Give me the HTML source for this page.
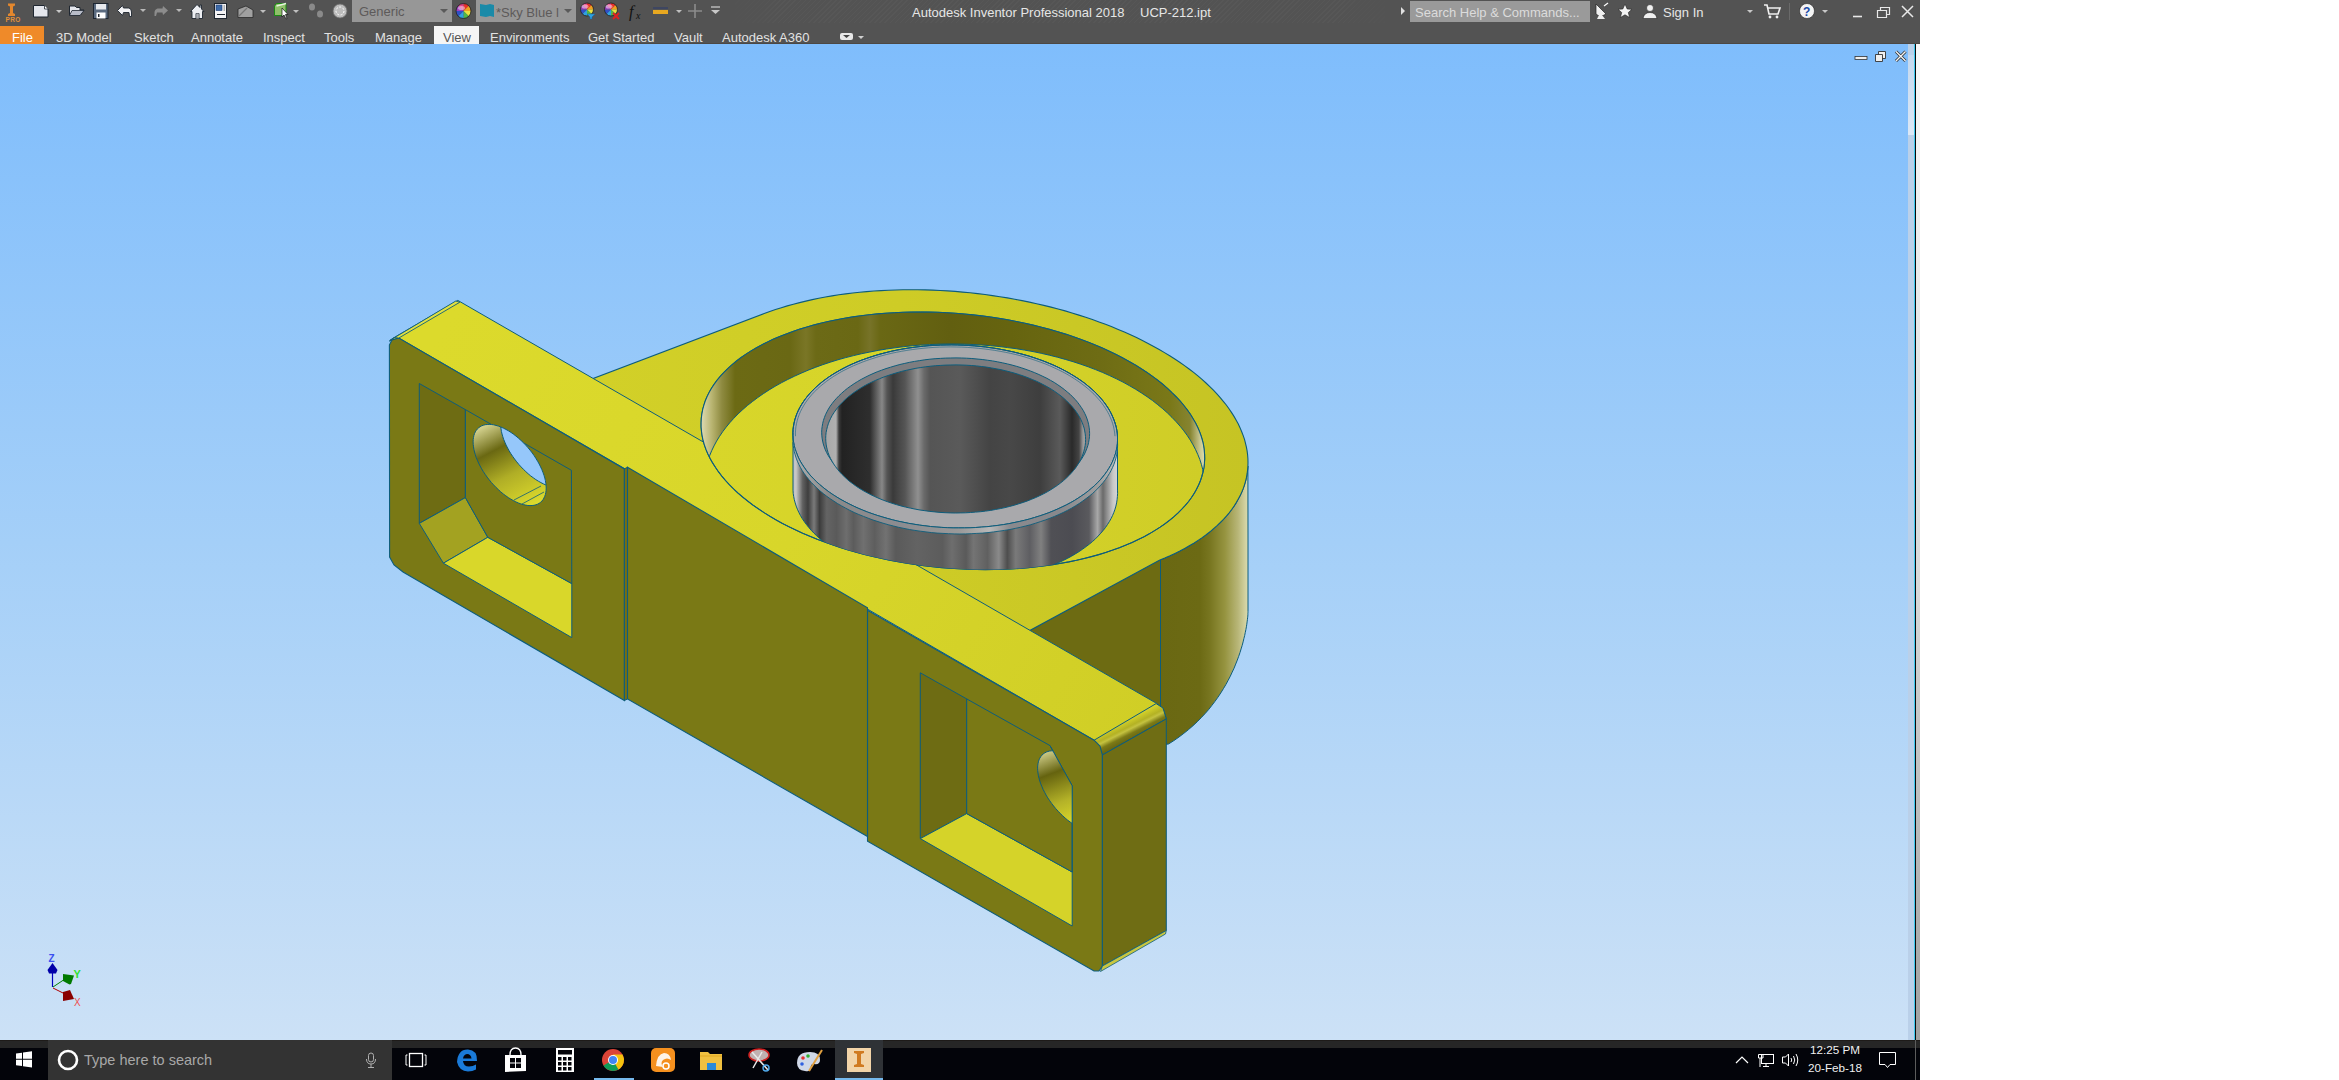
<!DOCTYPE html>
<html><head><meta charset="utf-8"><title>Autodesk Inventor Professional 2018</title>
<style>
html,body{margin:0;padding:0;}
body{width:2339px;height:1080px;position:relative;overflow:hidden;background:#ffffff;font-family:"Liberation Sans", sans-serif;}
.abs{position:absolute;}
#titlebar{left:0;top:0;width:1920px;height:44px;background:#535353;}
#viewport{left:0;top:44px;width:1908px;height:996px;background:linear-gradient(to bottom,#7fbdfc 0%,#a4cff8 50%,#cce1f6 100%);}
#vscroll{left:1908px;top:44px;width:6px;height:996px;background:#bad0e9;}
#vcyan{left:1914px;top:44px;width:1px;height:996px;background:#3cc8ee;}
#vline{left:1915px;top:44px;width:1px;height:996px;background:#0a0a0a;}
#vgap{left:1916px;top:44px;width:4px;height:996px;background:linear-gradient(to bottom,#f8f8f8 0%,#d8d8d8 55%,#a0a0a0 100%);}
#taskbar{left:0;top:1040px;width:1920px;height:40px;background:#03040a;}
.tab{position:absolute;top:29px;height:18px;font-size:13px;color:#e2e2e2;line-height:18px;white-space:nowrap;}
.ttl{position:absolute;top:5px;font-size:13px;color:#e6e6e6;line-height:16px;white-space:nowrap;}
</style></head>
<body>
<div id="titlebar" class="abs"></div>
<div class="abs" style="left:720px;top:0;width:680px;height:23px;background:repeating-linear-gradient(135deg,rgba(255,255,255,0) 0px,rgba(255,255,255,0) 2.6px,rgba(255,255,255,0.025) 2.6px,rgba(255,255,255,0.025) 3.6px);-webkit-mask-image:linear-gradient(to right,transparent 0,black 60px,black 620px,transparent 680px);"></div>
<div class="abs" style="left:0;top:43px;width:1920px;height:1px;background:#4c4844;"></div>
<div id="viewport" class="abs"></div>
<div id="vscroll" class="abs"></div>
<div id="vcyan" class="abs"></div>
<div id="vline" class="abs"></div>
<div class="abs" style="left:1908px;top:55px;width:6px;height:80px;background:linear-gradient(to bottom,#c4d8ee,#dce8f6);"></div>
<div id="vgap" class="abs"></div>
<div id="taskbar" class="abs"></div>
<div class="abs" style="left:0;top:1040px;width:1920px;height:8px;background:#262626;"></div><div class="abs" style="left:0;top:1040px;width:1920px;height:1px;background:#1e1b19;"></div><div class="abs" style="left:48px;top:1040px;width:344px;height:40px;background:#333333;"></div><div class="abs" style="left:835px;top:1040px;width:48px;height:40px;background:#2f3236;"></div><div class="abs" style="left:1915px;top:1040px;width:1px;height:40px;background:#5c5c5c;"></div><div class="abs" style="left:594px;top:1078px;width:40px;height:2px;background:#76b9ed;"></div><div class="abs" style="left:835px;top:1078px;width:48px;height:2px;background:#76b9ed;"></div><div class="abs" style="left:84px;top:1051px;font-size:14.5px;line-height:18px;color:#a8a8a8;font-family:"Liberation Sans", sans-serif;white-space:nowrap;">Type here to search</div><div class="abs" style="left:1810px;top:1043px;font-size:11.7px;line-height:14px;color:#f0f0f0;font-family:"Liberation Sans", sans-serif;white-space:nowrap;">12:25 PM</div><div class="abs" style="left:1808px;top:1061px;font-size:11.7px;line-height:14px;color:#f0f0f0;font-family:"Liberation Sans", sans-serif;white-space:nowrap;">20-Feb-18</div>

<div class="abs" style="left:0;top:26px;width:44px;height:18px;background:#ef8a29;"></div>
<div class="tab" style="left:12px;color:#ffffff;">File</div>
<div class="tab" style="left:56px;">3D Model</div>
<div class="tab" style="left:134px;">Sketch</div>
<div class="tab" style="left:191px;">Annotate</div>
<div class="tab" style="left:263px;">Inspect</div>
<div class="tab" style="left:324px;">Tools</div>
<div class="tab" style="left:375px;">Manage</div>
<div class="abs" style="left:434px;top:26px;width:45px;height:18px;background:#f5f5f5;"></div>
<div class="tab" style="left:443px;color:#555;">View</div>
<div class="tab" style="left:490px;">Environments</div>
<div class="tab" style="left:588px;">Get Started</div>
<div class="tab" style="left:674px;">Vault</div>
<div class="tab" style="left:722px;">Autodesk A360</div>

<div class="ttl" style="left:912px;">Autodesk Inventor Professional 2018</div>
<div class="ttl" style="left:1140px;">UCP-212.ipt</div>

<svg class="abs" style="left:0;top:0" width="2339" height="1080" viewBox="0 0 2339 1080">
<defs>
<linearGradient id="gCyl" x1="1160" y1="0" x2="1248" y2="0" gradientUnits="userSpaceOnUse"><stop offset="0.0000" stop-color="#6a6812"/><stop offset="0.4545" stop-color="#6c6a14"/><stop offset="0.5682" stop-color="#787620"/><stop offset="0.7386" stop-color="#969440"/><stop offset="0.8864" stop-color="#b8b678"/><stop offset="1.0000" stop-color="#dcdcb0"/></linearGradient>
<linearGradient id="gWall" x1="703" y1="0" x2="1205" y2="0" gradientUnits="userSpaceOnUse"><stop offset="0.0000" stop-color="#d8d4a8"/><stop offset="0.0179" stop-color="#b8b470"/><stop offset="0.0378" stop-color="#8e8a40"/><stop offset="0.0637" stop-color="#6c6a14"/><stop offset="0.1733" stop-color="#6a6814"/><stop offset="0.2052" stop-color="#7a7626"/><stop offset="0.2251" stop-color="#6c6a16"/><stop offset="0.3088" stop-color="#6a6814"/><stop offset="0.3327" stop-color="#777328"/><stop offset="0.3526" stop-color="#6a6814"/><stop offset="0.4920" stop-color="#625f10"/><stop offset="0.6116" stop-color="#66640f"/><stop offset="0.7908" stop-color="#6e6c14"/><stop offset="0.9303" stop-color="#7a7818"/><stop offset="0.9701" stop-color="#868430"/><stop offset="0.9900" stop-color="#c8c690"/><stop offset="1.0000" stop-color="#e0e0b0"/></linearGradient>
<linearGradient id="gBearSide" x1="793" y1="0" x2="1118" y2="0" gradientUnits="userSpaceOnUse"><stop offset="0.0000" stop-color="#c0c0c0"/><stop offset="0.0092" stop-color="#c8c8c8"/><stop offset="0.0298" stop-color="#606060"/><stop offset="0.0462" stop-color="#3e3e3e"/><stop offset="0.0646" stop-color="#7a7a7a"/><stop offset="0.0818" stop-color="#3c3c3c"/><stop offset="0.1037" stop-color="#646464"/><stop offset="0.1342" stop-color="#5a5a5a"/><stop offset="0.1643" stop-color="#6e6e6e"/><stop offset="0.1862" stop-color="#5c5c5c"/><stop offset="0.2166" stop-color="#707070"/><stop offset="0.2511" stop-color="#5e5e5e"/><stop offset="0.2862" stop-color="#727272"/><stop offset="0.3163" stop-color="#5a5a5a"/><stop offset="0.3815" stop-color="#636363"/><stop offset="0.4597" stop-color="#5c5c5c"/><stop offset="0.4892" stop-color="#6e6e6e"/><stop offset="0.5323" stop-color="#5a5a5a"/><stop offset="0.5551" stop-color="#747474"/><stop offset="0.5985" stop-color="#606060"/><stop offset="0.6332" stop-color="#8a8a8a"/><stop offset="0.6594" stop-color="#4e4e4e"/><stop offset="0.6852" stop-color="#7a7a7a"/><stop offset="0.7286" stop-color="#5e5e62"/><stop offset="0.7631" stop-color="#808080"/><stop offset="0.7938" stop-color="#505055"/><stop offset="0.8585" stop-color="#4c4c52"/><stop offset="0.9108" stop-color="#5a5a5e"/><stop offset="0.9372" stop-color="#a8a8a8"/><stop offset="0.9538" stop-color="#6a6a6a"/><stop offset="0.9846" stop-color="#c8c8c8"/><stop offset="1.0000" stop-color="#d8d8d8"/></linearGradient>
<linearGradient id="gBore" x1="826" y1="0" x2="1088" y2="0" gradientUnits="userSpaceOnUse"><stop offset="0.0000" stop-color="#a8a8a8"/><stop offset="0.0382" stop-color="#b0b0b0"/><stop offset="0.0496" stop-color="#3a3a3a"/><stop offset="0.0611" stop-color="#222222"/><stop offset="0.1679" stop-color="#2e2e2e"/><stop offset="0.1985" stop-color="#6a6a6a"/><stop offset="0.2137" stop-color="#888888"/><stop offset="0.2328" stop-color="#555555"/><stop offset="0.2557" stop-color="#3a3a3a"/><stop offset="0.3015" stop-color="#555555"/><stop offset="0.3511" stop-color="#909090"/><stop offset="0.3740" stop-color="#6a6a6a"/><stop offset="0.3969" stop-color="#555555"/><stop offset="0.5115" stop-color="#5a5a5a"/><stop offset="0.6260" stop-color="#444444"/><stop offset="0.7023" stop-color="#484848"/><stop offset="0.8168" stop-color="#3e3e3e"/><stop offset="0.8931" stop-color="#5a5a5a"/><stop offset="0.9389" stop-color="#2a2a2a"/><stop offset="0.9656" stop-color="#444444"/><stop offset="0.9809" stop-color="#9a9a9a"/><stop offset="1.0000" stop-color="#a8a8a8"/></linearGradient>
<linearGradient id="gTop" x1="593" y1="0" x2="1248" y2="0" gradientUnits="userSpaceOnUse"><stop offset="0.0000" stop-color="#d2d028"/><stop offset="0.4687" stop-color="#cecc26"/><stop offset="1.0000" stop-color="#c6c424"/></linearGradient>
<linearGradient id="gFloor" x1="703" y1="0" x2="1205" y2="0" gradientUnits="userSpaceOnUse"><stop offset="0.0000" stop-color="#d8d62a"/><stop offset="0.5120" stop-color="#d5d329"/><stop offset="1.0000" stop-color="#cfcd27"/></linearGradient>
<linearGradient id="gCham" x1="793" y1="0" x2="1118" y2="0" gradientUnits="userSpaceOnUse"><stop offset="0.0000" stop-color="#b0b0b0"/><stop offset="0.1138" stop-color="#8a8a8a"/><stop offset="0.3292" stop-color="#8c8c90"/><stop offset="0.5138" stop-color="#9a9a9a"/><stop offset="0.6062" stop-color="#b8b8b8"/><stop offset="0.6677" stop-color="#8a8a8e"/><stop offset="0.8215" stop-color="#88888c"/><stop offset="0.9446" stop-color="#a0a0a0"/><stop offset="1.0000" stop-color="#c0c0c0"/></linearGradient>
<linearGradient id="gStrip" x1="458" y1="301" x2="1160" y2="710" gradientUnits="userSpaceOnUse"><stop offset="0" stop-color="#dcda2c"/><stop offset="0.5" stop-color="#d8d62a"/><stop offset="1" stop-color="#d0ce26"/></linearGradient>
<linearGradient id="gFilR" x1="1126" y1="721" x2="1134" y2="737" gradientUnits="userSpaceOnUse"><stop offset="0" stop-color="#d2d02a"/><stop offset="0.35" stop-color="#b4b224"/><stop offset="0.5" stop-color="#c4c240"/><stop offset="0.75" stop-color="#7c7a16"/><stop offset="1" stop-color="#6a6812"/></linearGradient>
<clipPath id="cRim"><path d="M701.3,418.2 L701.9,413.8 L702.7,409.4 L703.9,405.1 L705.3,400.8 L707.1,396.5 L709.2,392.3 L711.5,388.2 L714.2,384.1 L717.1,380.1 L720.4,376.2 L723.9,372.3 L727.7,368.6 L731.8,364.9 L736.1,361.3 L740.7,357.8 L745.6,354.4 L750.7,351.1 L756.0,348.0 L761.6,344.9 L767.5,342.0 L773.5,339.1 L779.8,336.4 L786.3,333.9 L793.0,331.4 L799.9,329.1 L807.0,327.0 L814.2,324.9 L821.6,323.0 L829.2,321.3 L836.9,319.7 L844.8,318.2 L852.8,316.9 L860.9,315.8 L869.2,314.8 L877.5,313.9 L886.0,313.2 L894.5,312.7 L903.1,312.3 L911.7,312.1 L920.4,312.0 L929.1,312.1 L937.9,312.3 L946.7,312.7 L955.5,313.3 L964.2,314.0 L973.0,314.9 L981.8,315.9 L990.5,317.0 L999.1,318.4 L1007.8,319.8 L1016.3,321.5 L1024.8,323.2 L1033.1,325.1 L1041.4,327.2 L1049.6,329.4 L1057.7,331.7 L1065.6,334.1 L1073.4,336.7 L1081.0,339.4 L1088.5,342.3 L1095.8,345.2 L1103.0,348.3 L1109.9,351.5 L1116.7,354.8 L1123.3,358.2 L1129.6,361.7 L1135.8,365.3 L1141.7,369.0 L1147.4,372.7 L1152.9,376.6 L1158.1,380.5 L1163.1,384.5 L1167.8,388.6 L1172.2,392.8 L1176.4,397.0 L1180.3,401.2 L1183.9,405.5 L1187.3,409.9 L1190.4,414.2 L1193.1,418.7 L1195.6,423.1 L1197.8,427.6 L1199.7,432.0 L1201.3,436.5 L1202.6,441.0 L1203.6,445.5 L1204.2,450.0 L1204.6,454.5 L1204.7,458.9 L1204.4,463.4 L1203.9,467.8 L1203.0,472.2 L1201.8,476.5 L1200.4,480.8 L1198.6,485.1 L1196.5,489.3 L1194.2,493.4 L1191.5,497.5 L1188.6,501.5 L1185.3,505.4 L1181.8,509.2 L1178.0,513.0 L1174.0,516.7 L1169.6,520.3 L1165.0,523.8 L1160.2,527.1 L1155.0,530.4 L1149.7,533.6 L1144.1,536.7 L1138.2,539.6 L1132.2,542.4 L1125.9,545.1 L1119.4,547.7 L1112.7,550.1 L1105.8,552.4 L1098.8,554.6 L1091.5,556.6 L1084.1,558.5 L1076.5,560.3 L1068.8,561.9 L1060.9,563.3 L1052.9,564.7 L1044.8,565.8 L1036.5,566.8 L1028.2,567.7 L1019.8,568.4 L1011.2,568.9 L1002.7,569.3 L994.0,569.5 L985.3,569.6 L976.6,569.5 L967.8,569.2 L959.0,568.8 L950.3,568.3 L941.5,567.6 L932.7,566.7 L923.9,565.7 L915.2,564.5 L906.6,563.2 L898.0,561.7 L889.4,560.1 L880.9,558.3 L872.6,556.4 L864.3,554.4 L856.1,552.2 L848.1,549.9 L840.1,547.4 L832.3,544.8 L824.7,542.1 L817.2,539.3 L809.9,536.3 L802.7,533.3 L795.8,530.1 L789.0,526.8 L782.4,523.4 L776.1,519.9 L769.9,516.3 L764.0,512.6 L758.3,508.8 L752.8,505.0 L747.6,501.0 L742.6,497.0 L737.9,493.0 L733.5,488.8 L729.3,484.6 L725.4,480.4 L721.8,476.1 L718.4,471.7 L715.4,467.3 L712.6,462.9 L710.1,458.5 L707.9,454.0 L706.0,449.5 L704.4,445.0 L703.1,440.5 L702.2,436.1 L701.5,431.6 L701.1,427.1 L701.1,422.6 Z"/></clipPath>
<clipPath id="cRimAbove"><path d="M701.3,418.2 L701.9,413.8 L702.7,409.4 L703.9,405.1 L705.3,400.8 L707.1,396.5 L709.2,392.3 L711.5,388.2 L714.2,384.1 L717.1,380.1 L720.4,376.2 L723.9,372.3 L727.7,368.6 L731.8,364.9 L736.1,361.3 L740.7,357.8 L745.6,354.4 L750.7,351.1 L756.0,348.0 L761.6,344.9 L767.5,342.0 L773.5,339.1 L779.8,336.4 L786.3,333.9 L793.0,331.4 L799.9,329.1 L807.0,327.0 L814.2,324.9 L821.6,323.0 L829.2,321.3 L836.9,319.7 L844.8,318.2 L852.8,316.9 L860.9,315.8 L869.2,314.8 L877.5,313.9 L886.0,313.2 L894.5,312.7 L903.1,312.3 L911.7,312.1 L920.4,312.0 L929.1,312.1 L937.9,312.3 L946.7,312.7 L955.5,313.3 L964.2,314.0 L973.0,314.9 L981.8,315.9 L990.5,317.0 L999.1,318.4 L1007.8,319.8 L1016.3,321.5 L1024.8,323.2 L1033.1,325.1 L1041.4,327.2 L1049.6,329.4 L1057.7,331.7 L1065.6,334.1 L1073.4,336.7 L1081.0,339.4 L1088.5,342.3 L1095.8,345.2 L1103.0,348.3 L1109.9,351.5 L1116.7,354.8 L1123.3,358.2 L1129.6,361.7 L1135.8,365.3 L1141.7,369.0 L1147.4,372.7 L1152.9,376.6 L1158.1,380.5 L1163.1,384.5 L1167.8,388.6 L1172.2,392.8 L1176.4,397.0 L1180.3,401.2 L1183.9,405.5 L1187.3,409.9 L1190.4,414.2 L1193.1,418.7 L1195.6,423.1 L1197.8,427.6 L1199.7,432.0 L1201.3,436.5 L1202.6,441.0 L1203.6,445.5 L1204.2,450.0 L1204.6,454.5 L1204.7,458.9 L1204.4,463.4 L1203.9,467.8 L1203.0,472.2 L1201.8,476.5 L1200.4,480.8 L1198.6,485.1 L1196.5,489.3 L1194.2,493.4 L1191.5,497.5 L1188.6,501.5 L1185.3,505.4 L1181.8,509.2 L1178.0,513.0 L1174.0,516.7 L1169.6,520.3 L1165.0,523.8 L1160.2,527.1 L1155.0,530.4 L1149.7,533.6 L1144.1,536.7 L1138.2,539.6 L1132.2,542.4 L1125.9,545.1 L1119.4,547.7 L1112.7,550.1 L1105.8,552.4 L1098.8,554.6 L1091.5,556.6 L1084.1,558.5 L1076.5,560.3 L1068.8,561.9 L1060.9,563.3 L1052.9,564.7 L1044.8,565.8 L1036.5,566.8 L1028.2,567.7 L1019.8,568.4 L1011.2,568.9 L1002.7,569.3 L994.0,569.5 L985.3,569.6 L976.6,569.5 L967.8,569.2 L959.0,568.8 L950.3,568.3 L941.5,567.6 L932.7,566.7 L923.9,565.7 L915.2,564.5 L906.6,563.2 L898.0,561.7 L889.4,560.1 L880.9,558.3 L872.6,556.4 L864.3,554.4 L856.1,552.2 L848.1,549.9 L840.1,547.4 L832.3,544.8 L824.7,542.1 L817.2,539.3 L809.9,536.3 L802.7,533.3 L795.8,530.1 L789.0,526.8 L782.4,523.4 L776.1,519.9 L769.9,516.3 L764.0,512.6 L758.3,508.8 L752.8,505.0 L747.6,501.0 L742.6,497.0 L737.9,493.0 L733.5,488.8 L729.3,484.6 L725.4,480.4 L721.8,476.1 L718.4,471.7 L715.4,467.3 L712.6,462.9 L710.1,458.5 L707.9,454.0 L706.0,449.5 L704.4,445.0 L703.1,440.5 L702.2,436.1 L701.5,431.6 L701.1,427.1 L701.1,422.6 Z"/></clipPath>
<linearGradient id="gHoleL" x1="488" y1="425" x2="530" y2="506" gradientUnits="userSpaceOnUse"><stop offset="0" stop-color="#d0ce8a"/><stop offset="0.28" stop-color="#6a6812"/><stop offset="0.6" stop-color="#b0ae26"/><stop offset="1" stop-color="#dcda2c"/></linearGradient>
<clipPath id="cHoleL"><path d="M478.7,427.7 L480.1,426.7 L481.7,425.8 L483.4,425.2 L485.2,424.7 L487.2,424.5 L489.2,424.4 L491.4,424.5 L493.7,424.8 L496.0,425.4 L498.4,426.1 L500.8,427.0 L503.3,428.1 L505.9,429.4 L508.4,430.8 L511.0,432.4 L513.5,434.2 L516.0,436.1 L518.5,438.2 L521.0,440.4 L523.4,442.7 L525.7,445.1 L527.9,447.6 L530.1,450.2 L532.2,452.9 L534.1,455.6 L535.9,458.4 L537.6,461.2 L539.2,464.0 L540.6,466.9 L541.9,469.7 L543.0,472.5 L544.0,475.3 L544.8,478.0 L545.4,480.6 L545.8,483.2 L546.1,485.7 L546.2,488.1 L546.1,490.4 L545.8,492.5 L545.4,494.5 L544.7,496.4 L543.9,498.1 L543.0,499.7 L541.9,501.1 L540.6,502.3 L539.2,503.3 L537.6,504.2 L535.9,504.8 L534.0,505.3 L532.1,505.5 L530.0,505.6 L527.9,505.5 L525.6,505.1 L523.3,504.6 L520.9,503.9 L518.4,503.0 L515.9,501.9 L513.4,500.6 L510.9,499.2 L508.3,497.6 L505.8,495.8 L503.2,493.9 L500.7,491.8 L498.3,489.6 L495.9,487.3 L493.6,484.9 L491.3,482.4 L489.2,479.8 L487.1,477.1 L485.2,474.4 L483.3,471.6 L481.6,468.8 L480.1,466.0 L478.6,463.1 L477.4,460.3 L476.2,457.5 L475.3,454.7 L474.5,452.0 L473.9,449.4 L473.5,446.8 L473.2,444.3 L473.1,441.9 L473.2,439.6 L473.5,437.5 L473.9,435.5 L474.5,433.6 L475.3,431.9 L476.3,430.3 L477.4,428.9 Z"/></clipPath>
<linearGradient id="gHoleR" x1="1045" y1="752" x2="1072" y2="822" gradientUnits="userSpaceOnUse"><stop offset="0" stop-color="#d0ce8a"/><stop offset="0.3" stop-color="#65630f"/><stop offset="0.7" stop-color="#b4b228"/><stop offset="1" stop-color="#d8d62a"/></linearGradient>
<clipPath id="cPocketR"><path d="M966.7,698.9 L1050.0,745.6 L1072.2,785.8 L1072.2,872.0 L966.7,813.6 Z"/></clipPath>
</defs>
<path d="M8,3.5 L15,3.5 L15,5.5 L13,6.5 L13,13 L15,14 L15,16 L8,16 L8,14 L10,13 L10,6.5 L8,5.5 Z" fill="#e3872d"/><text x="5.5" y="22" font-family='"Liberation Sans", sans-serif' font-size="6.5" font-weight="bold" fill="#e0903a" letter-spacing="0.3">PRO</text><path d="M33.5,5.5 L44.5,5.5 L48,9 L48,17 L33.5,17 Z" fill="#e4e6ec" stroke="#1e2630" stroke-width="1"/><path d="M44.5,5.5 L44.5,9 L48,9" fill="#fff" stroke="#1e2630" stroke-width="0.8"/><path d="M56,10 L62,10 L59,13 Z" fill="#c8c8c8"/><path d="M69.5,6 L75,6 L76.5,7.5 L80,7.5 L80,10 L84,10 L80,15.5 L69.5,15.5 Z" fill="#e4e6ec" stroke="#1e2630" stroke-width="1"/><path d="M72,10.5 L84,10.5 L80,15.5 L69.5,15.5 Z" fill="#b8bcc8" stroke="#1e2630" stroke-width="0.8"/><rect x="93.5" y="3.5" width="14.5" height="15" fill="#5b6b80" stroke="#1e2630" stroke-width="1"/><rect x="96" y="4" width="10" height="5.5" fill="#e8eaee"/><rect x="96.5" y="12.5" width="9" height="6" fill="#ffffff"/><rect x="98" y="14" width="1.5" height="3" fill="#1e2630"/><path d="M117.5,10.5 L122.5,5.5 L123.5,8 L129,8 Q131.5,9 131.5,12 L131.5,16.5 L129.5,16.5 L129,12.5 L123.5,12.5 L122.5,15.5 Z" fill="#f2f2f4" stroke="#1e2630" stroke-width="0.9"/><path d="M140,9 L146,9 L143,12 Z" fill="#b8b8b8"/><path d="M168,10.5 L163,6 L162.5,8.5 L157.5,8.5 Q154.5,9.5 154.5,12.5 L154.5,16 L156,16 L157,12.5 L162.5,12.5 L163,15 Z" fill="#8c8c8c"/><path d="M176,9 L182,9 L179,12 Z" fill="#b8b8b8"/><path d="M190.5,11.5 L197,4.5 L200,7.5 L200,5 L201.5,5 L201.5,9 L204,11.5 L202.5,11.5 L202.5,18.5 L199,18.5 L199,13.5 L196,13.5 L196,18.5 L192,18.5 L192,11.5 Z" fill="#eceef2" stroke="#1e2630" stroke-width="0.9"/><rect x="196.2" y="13.5" width="2.6" height="5" fill="#a8acb4"/><rect x="214.5" y="3.5" width="12" height="15" fill="#f4f4f6" stroke="#1e2630" stroke-width="1"/><rect x="216" y="5" width="6" height="5.5" fill="#3d6aa8" stroke="#1a3a70" stroke-width="0.6"/><rect x="223.5" y="5" width="1.5" height="6" fill="#b0b0b0"/><path d="M217,14.5 L225,14.5" stroke="#1e2630" stroke-width="1"/><path d="M238,9 L246,6 L253,10 L253,17.5 L238,17.5 Z" fill="#a0a0a0" stroke="#2a2a2a" stroke-width="0.8"/><path d="M239,16 L247,8" stroke="#777" stroke-width="1.2"/><path d="M260,10 L266,10 L263,13 Z" fill="#c0c0c0"/><path d="M274.5,6 L276.5,3.5 L286,3.5 L286,14 L283.5,15.5 L274.5,15.5 Z" fill="#8fbf6a" stroke="#1c8a14" stroke-width="1"/><path d="M276.5,6 L286,3.5" stroke="#e8f4e0" stroke-width="1.5"/><path d="M282,8 L282,17 L284,15 L286,19 L287,18.5 L285.5,14.5 L288,14.5 Z" fill="#fff" stroke="#111" stroke-width="0.7"/><path d="M293,10 L299,10 L296,13 Z" fill="#c0c0c0"/><ellipse cx="312" cy="7" rx="3" ry="3.5" fill="#8a8a8a"/><ellipse cx="320" cy="14" rx="3" ry="3.5" fill="#8a8a8a"/><circle cx="340" cy="11" r="7" fill="#bcbcbc" stroke="#6a6a6a" stroke-width="0.8"/><circle cx="340" cy="11" r="4" fill="none" stroke="#ffffff" stroke-width="1" stroke-dasharray="2 1.5"/><rect x="352" y="0" width="100" height="22" fill="#979797"/><text x="359" y="16" font-family='"Liberation Sans", sans-serif' font-size="13" fill="#5d5a5a">Generic</text><path d="M440,9 L448,9 L444,13 Z" fill="#5a5a5a"/><path d="M463.5,11 L463.50,3.50 A7.5,7.5 0 0 1 468.80,5.70 Z" fill="#e8302a"/><path d="M463.5,11 L468.80,5.70 A7.5,7.5 0 0 1 471.00,11.00 Z" fill="#f0a020"/><path d="M463.5,11 L471.00,11.00 A7.5,7.5 0 0 1 468.80,16.30 Z" fill="#e8e040"/><path d="M463.5,11 L468.80,16.30 A7.5,7.5 0 0 1 463.50,18.50 Z" fill="#50b848"/><path d="M463.5,11 L463.50,18.50 A7.5,7.5 0 0 1 458.20,16.30 Z" fill="#30a0e0"/><path d="M463.5,11 L458.20,16.30 A7.5,7.5 0 0 1 456.00,11.00 Z" fill="#3050c8"/><path d="M463.5,11 L456.00,11.00 A7.5,7.5 0 0 1 458.20,5.70 Z" fill="#a040c0"/><path d="M463.5,11 L458.20,5.70 A7.5,7.5 0 0 1 463.50,3.50 Z" fill="#e04088"/><circle cx="463.5" cy="11" r="7.5" fill="none" stroke="#202020" stroke-width="0.8"/><ellipse cx="461.5" cy="8" rx="3.5" ry="2" fill="#fff" opacity="0.45"/><rect x="476" y="0" width="100" height="22" fill="#979797"/><path d="M480,4 L486,5 L490,4 L494,5 L494,17 L490,16 L486,17 L480,16 Z" fill="#1a8aa8"/><text x="496" y="17" font-family='"Liberation Sans", sans-serif' font-size="13" fill="#5d5a5a">*Sky Blue l</text><path d="M564,9 L572,9 L568,13 Z" fill="#5a5a5a"/><path d="M587,9.5 L587.00,3.00 A6.5,6.5 0 0 1 591.60,4.90 Z" fill="#e8302a"/><path d="M587,9.5 L591.60,4.90 A6.5,6.5 0 0 1 593.50,9.50 Z" fill="#f0a020"/><path d="M587,9.5 L593.50,9.50 A6.5,6.5 0 0 1 591.60,14.10 Z" fill="#e8e040"/><path d="M587,9.5 L591.60,14.10 A6.5,6.5 0 0 1 587.00,16.00 Z" fill="#50b848"/><path d="M587,9.5 L587.00,16.00 A6.5,6.5 0 0 1 582.40,14.10 Z" fill="#30a0e0"/><path d="M587,9.5 L582.40,14.10 A6.5,6.5 0 0 1 580.50,9.50 Z" fill="#3050c8"/><path d="M587,9.5 L580.50,9.50 A6.5,6.5 0 0 1 582.40,4.90 Z" fill="#a040c0"/><path d="M587,9.5 L582.40,4.90 A6.5,6.5 0 0 1 587.00,3.00 Z" fill="#e04088"/><circle cx="587" cy="9.5" r="6.5" fill="none" stroke="#202020" stroke-width="0.8"/><ellipse cx="585" cy="6.5" rx="3.5" ry="2" fill="#fff" opacity="0.45"/><path d="M587,14 L595,14 L592,17 L592,19 L590,19 L590,17 Z" fill="#30a0e0" stroke="#1060a0" stroke-width="0.5"/><path d="M611,9.5 L611.00,3.00 A6.5,6.5 0 0 1 615.60,4.90 Z" fill="#e8302a"/><path d="M611,9.5 L615.60,4.90 A6.5,6.5 0 0 1 617.50,9.50 Z" fill="#f0a020"/><path d="M611,9.5 L617.50,9.50 A6.5,6.5 0 0 1 615.60,14.10 Z" fill="#e8e040"/><path d="M611,9.5 L615.60,14.10 A6.5,6.5 0 0 1 611.00,16.00 Z" fill="#50b848"/><path d="M611,9.5 L611.00,16.00 A6.5,6.5 0 0 1 606.40,14.10 Z" fill="#30a0e0"/><path d="M611,9.5 L606.40,14.10 A6.5,6.5 0 0 1 604.50,9.50 Z" fill="#3050c8"/><path d="M611,9.5 L604.50,9.50 A6.5,6.5 0 0 1 606.40,4.90 Z" fill="#a040c0"/><path d="M611,9.5 L606.40,4.90 A6.5,6.5 0 0 1 611.00,3.00 Z" fill="#e04088"/><circle cx="611" cy="9.5" r="6.5" fill="none" stroke="#202020" stroke-width="0.8"/><ellipse cx="609" cy="6.5" rx="3.5" ry="2" fill="#fff" opacity="0.45"/><path d="M613,13 L619,19 M619,13 L613,19" stroke="#e02020" stroke-width="1.8"/><text x="629" y="17" font-family="Liberation Serif, serif" font-style="italic" font-size="16" fill="#111">f</text><text x="636" y="19" font-family="Liberation Serif, serif" font-style="italic" font-size="10" fill="#111">x</text><path d="M653,8 L668,8" stroke="#2a3a70" stroke-width="1"/><rect x="653" y="10" width="15" height="4" fill="#e8a820"/><path d="M676,10 L682,10 L679,13 Z" fill="#c0c0c0"/><path d="M695,4 L695,18 M688,11 L702,11" stroke="#8c8c8c" stroke-width="1.6"/><path d="M711,7 L720,7" stroke="#c8c8c8" stroke-width="1.3"/><path d="M711,10 L720,10 L715.5,14 Z" fill="#c8c8c8"/><rect x="840" y="33" width="13" height="7" rx="2" fill="#e8e8e8"/><path d="M843,35 L850,35 L846.5,38 Z" fill="#444"/><path d="M858,36 L864,36 L861,39 Z" fill="#d0d0d0"/>
<path d="M1401,7 L1405,11 L1401,15 Z" fill="#e0e0e0"/><rect x="1410" y="1" width="180" height="21" fill="#9a9a9a"/><text x="1415" y="17" font-family='"Liberation Sans", sans-serif' font-size="13" fill="#dcdcdc">Search Help &amp; Commands...</text><path d="M1596,4 L1606,14 Q1600,18 1596,14 Z" fill="#f0f0f0" stroke="#222" stroke-width="0.7"/><path d="M1599,15 L1597,19 L1605,19 L1602,15 Z" fill="#f0f0f0"/><path d="M1604,6 L1608,3" stroke="#fff" stroke-width="1.2"/><path d="M1625,4 L1627.2,9 L1632,9.3 L1628.3,12.5 L1629.6,17.5 L1625,14.8 L1620.4,17.5 L1621.7,12.5 L1618,9.3 L1622.8,9 Z" fill="#f4f4f4" stroke="#222" stroke-width="0.6"/><circle cx="1650" cy="8" r="3.5" fill="#f0f0f0" stroke="#222" stroke-width="0.6"/><path d="M1643,18.5 Q1644,12.5 1650,12.5 Q1656,12.5 1657,18.5 Z" fill="#f0f0f0" stroke="#222" stroke-width="0.6"/><text x="1663" y="17" font-family='"Liberation Sans", sans-serif' font-size="13" fill="#e6e6e6">Sign In</text><path d="M1747,10 L1753,10 L1750,13 Z" fill="#c8c8c8"/><path d="M1764,5 L1767,5 L1769,14 L1778,14 L1780,8 L1768,8" fill="none" stroke="#f0f0f0" stroke-width="1.6"/><circle cx="1770" cy="17" r="1.4" fill="#f0f0f0"/><circle cx="1777" cy="17" r="1.4" fill="#f0f0f0"/><path d="M1789.5,3 L1789.5,20" stroke="#6a6a6a" stroke-width="1"/><circle cx="1807" cy="11" r="7.5" fill="#f4f4f4" stroke="#222" stroke-width="0.6"/><text x="1803" y="16" font-family='"Liberation Sans", sans-serif' font-size="12" font-weight="bold" fill="#1a4aa8">?</text><path d="M1822,10 L1828,10 L1825,13 Z" fill="#c8c8c8"/><path d="M1853,16.5 L1862,16.5" stroke="#e8e8e8" stroke-width="1.6"/><path d="M1877.5,10.5 L1886.5,10.5 L1886.5,17.5 L1877.5,17.5 Z M1880.5,10.5 L1880.5,7.5 L1889.5,7.5 L1889.5,14.5 L1886.5,14.5" fill="none" stroke="#e8e8e8" stroke-width="1.2"/><path d="M1902,6 L1913,17 M1913,6 L1902,17" stroke="#e8e8e8" stroke-width="1.5"/><rect x="1855" y="56.5" width="12" height="3" fill="#f0f0f0" stroke="#333" stroke-width="0.8"/><path d="M1875.5,54.5 L1882.5,54.5 L1882.5,61.5 L1875.5,61.5 Z M1878.5,54.5 L1878.5,51.5 L1885.5,51.5 L1885.5,58.5 L1882.5,58.5" fill="#f0f0f0" stroke="#333" stroke-width="0.9"/><path d="M1896,51.5 L1905.5,61 M1905.5,51.5 L1896,61" stroke="#333" stroke-width="3"/><path d="M1896,51.5 L1905.5,61 M1905.5,51.5 L1896,61" stroke="#f4f4f4" stroke-width="1.4"/>
<path d="M1159.4,560.3 L1163.5,558.6 L1167.4,556.9 L1171.3,555.2 L1175.1,553.4 L1178.8,551.6 L1182.4,549.7 L1185.9,547.8 L1189.4,545.8 L1192.7,543.8 L1196.0,541.8 L1199.2,539.7 L1202.3,537.5 L1205.3,535.4 L1208.2,533.2 L1211.0,531.0 L1213.7,528.7 L1216.3,526.4 L1218.8,524.0 L1221.2,521.7 L1223.6,519.3 L1225.8,516.8 L1227.9,514.4 L1229.9,511.9 L1231.8,509.4 L1233.6,506.8 L1235.3,504.2 L1236.9,501.6 L1238.4,499.0 L1239.8,496.4 L1241.1,493.7 L1242.3,491.0 L1243.3,488.3 L1244.3,485.6 L1245.1,482.8 L1245.9,480.0 L1246.5,477.3 L1247.0,474.5 L1247.4,471.6 L1247.7,468.8 L1247.9,466.0 L1248.0,540.0 L1248.0,611.5 L1248.0,612.3 L1247.9,613.3 L1247.9,614.6 L1247.8,616.1 L1247.6,617.8 L1247.4,619.7 L1247.1,621.9 L1246.8,624.2 L1246.4,626.8 L1245.9,629.5 L1245.3,632.3 L1244.7,635.4 L1243.9,638.5 L1243.1,641.9 L1242.2,645.3 L1241.1,648.9 L1240.0,652.5 L1238.7,656.3 L1237.3,660.1 L1235.7,664.1 L1234.1,668.1 L1232.2,672.1 L1230.3,676.2 L1228.1,680.4 L1225.9,684.5 L1223.4,688.7 L1220.8,692.9 L1218.0,697.1 L1215.0,701.3 L1211.8,705.5 L1208.5,709.7 L1204.9,713.8 L1201.1,717.8 L1197.2,721.8 L1193.0,725.7 L1188.5,729.6 L1183.9,733.3 L1179.0,737.0 L1173.9,740.6 L1168.5,744.0 L1160.5,745.0 Z" fill="url(#gCyl)" stroke="#0d5d7c" stroke-width="1"/>
<path d="M1020.0,628.0 L1160.5,558.0 L1160.5,706.0 L1156.0,704.0 Z" fill="#6d6b12" stroke="#0d5d7c" stroke-width="1"/>
<path d="M590.0,385.0 L593.2,378.5 L764.2,313.6 L769.8,311.5 L775.5,309.6 L781.4,307.7 L787.3,305.9 L793.4,304.2 L799.6,302.6 L805.9,301.1 L812.3,299.6 L818.8,298.3 L825.4,297.0 L832.1,295.9 L838.9,294.8 L845.7,293.9 L852.7,293.0 L859.7,292.3 L866.7,291.6 L873.9,291.0 L881.1,290.6 L888.3,290.2 L895.6,290.0 L902.9,289.8 L910.3,289.7 L917.7,289.8 L925.2,289.9 L932.6,290.1 L940.1,290.5 L947.6,290.9 L955.1,291.4 L962.6,292.1 L970.1,292.8 L977.6,293.6 L985.0,294.5 L992.5,295.6 L999.9,296.7 L1007.4,297.9 L1014.7,299.2 L1022.1,300.6 L1029.4,302.1 L1036.6,303.7 L1043.8,305.4 L1051.0,307.1 L1058.1,309.0 L1065.1,310.9 L1072.0,313.0 L1078.9,315.1 L1085.7,317.3 L1092.4,319.5 L1099.0,321.9 L1105.5,324.3 L1111.9,326.8 L1118.2,329.4 L1124.4,332.1 L1130.5,334.8 L1136.5,337.6 L1142.4,340.5 L1148.1,343.4 L1153.7,346.4 L1159.2,349.5 L1164.5,352.6 L1169.7,355.8 L1174.8,359.0 L1179.7,362.3 L1184.5,365.6 L1189.1,369.0 L1193.6,372.4 L1197.9,375.9 L1202.0,379.4 L1206.0,383.0 L1209.8,386.6 L1213.4,390.2 L1216.9,393.9 L1220.2,397.6 L1223.3,401.3 L1226.3,405.0 L1229.0,408.8 L1231.6,412.6 L1234.0,416.4 L1236.2,420.2 L1238.3,424.0 L1240.1,427.9 L1241.7,431.7 L1243.2,435.6 L1244.5,439.4 L1245.5,443.3 L1246.4,447.1 L1247.1,450.9 L1247.6,454.8 L1247.9,458.6 L1248.0,462.4 L1247.9,466.2 L1247.6,470.0 L1247.1,473.7 L1246.5,477.4 L1245.6,481.1 L1244.5,484.8 L1243.3,488.4 L1241.8,492.0 L1240.2,495.6 L1238.3,499.1 L1236.3,502.6 L1234.1,506.1 L1231.7,509.5 L1229.2,512.8 L1226.4,516.1 L1223.5,519.3 L1220.4,522.5 L1217.1,525.7 L1213.6,528.7 L1210.0,531.8 L1206.2,534.7 L1202.2,537.6 L1198.1,540.4 L1193.8,543.2 L1189.3,545.8 L1184.7,548.4 L1179.9,551.0 L1175.0,553.4 L1170.0,555.8 L1164.8,558.1 L1159.4,560.3 L1027.0,632.0 Z" fill="url(#gTop)" stroke="#0d5d7c" stroke-width="1.1"/>
<path d="M389.5,341.0 L395.0,337.0 L457.8,300.4 L1156.1,703.1 L1163.0,708.0 L1166.3,718.9 L1102.4,755.0 L1098.0,746.0 L1094.1,740.2 L398.8,338.0 Z" fill="url(#gStrip)" stroke="#0d5d7c" stroke-width="1"/>
<path d="M1094.1,740.2 L1156.1,703.6 L1163.0,708.0 L1166.3,718.9 L1102.4,755.0 L1099.0,746.0 Z" fill="url(#gFilR)" stroke="#0d5d7c" stroke-width="1"/>
<path d="M389.4,345.0 L392.0,340.0 L398.8,338.0 L624.4,468.9 L624.4,700.6 L403.0,572.0 L394.0,565.0 L389.6,557.0 Z" fill="#7a7915" stroke="#0d5d7c" stroke-width="1.1"/>
<path d="M867.5,610.3 L1094.1,740.2 L1100.0,746.0 L1102.4,755.0 L1102.4,966.0 L1099.0,971.0 L1094.0,971.0 L867.5,841.3 Z" fill="#7a7915" stroke="#0d5d7c" stroke-width="1.1"/>
<path d="M624.4,468.9 L627.5,467.2 L627.5,698.9 L624.4,700.6 Z" fill="#746e14" stroke="#0d5d7c" stroke-width="1"/>
<path d="M627.5,467.2 L867.5,607.8 L867.5,836.5 L627.5,698.9 Z" fill="#7a7915" stroke="#0d5d7c" stroke-width="1.1"/>
<path d="M1102.4,755.0 L1166.3,718.9 L1166.3,930.5 L1102.4,966.0 Z" fill="#6f6d14" stroke="#0d5d7c" stroke-width="1"/>
<path d="M1102.4,966.0 L1166.3,930.5 L1165.5,934.0 L1100.5,971.5 Z" fill="#c8c640" stroke="#0d5d7c" stroke-width="0.8"/>
<path d="M419.3,383.5 L465.4,409.6 L465.4,497.6 L419.3,523.4 Z" fill="#6e6c13" stroke="#0d5d7c" stroke-width="1"/>
<path d="M419.3,523.4 L465.4,497.6 L487.8,537.3 L443.4,563.2 Z" fill="#a3a221" stroke="#0d5d7c" stroke-width="1"/>
<path d="M443.4,563.2 L487.8,537.3 L571.8,583.6 L571.8,637.6 Z" fill="#d9d72a" stroke="#0d5d7c" stroke-width="1"/>
<path d="M465.4,409.6 L571.4,470.3 L571.8,583.6 L487.8,537.3 L465.4,497.6 Z" fill="#7a7915" stroke="#0d5d7c" stroke-width="1"/>
<path d="M478.7,427.7 L480.1,426.7 L481.7,425.8 L483.4,425.2 L485.2,424.7 L487.2,424.5 L489.2,424.4 L491.4,424.5 L493.7,424.8 L496.0,425.4 L498.4,426.1 L500.8,427.0 L503.3,428.1 L505.9,429.4 L508.4,430.8 L511.0,432.4 L513.5,434.2 L516.0,436.1 L518.5,438.2 L521.0,440.4 L523.4,442.7 L525.7,445.1 L527.9,447.6 L530.1,450.2 L532.2,452.9 L534.1,455.6 L535.9,458.4 L537.6,461.2 L539.2,464.0 L540.6,466.9 L541.9,469.7 L543.0,472.5 L544.0,475.3 L544.8,478.0 L545.4,480.6 L545.8,483.2 L546.1,485.7 L546.2,488.1 L546.1,490.4 L545.8,492.5 L545.4,494.5 L544.7,496.4 L543.9,498.1 L543.0,499.7 L541.9,501.1 L540.6,502.3 L539.2,503.3 L537.6,504.2 L535.9,504.8 L534.0,505.3 L532.1,505.5 L530.0,505.6 L527.9,505.5 L525.6,505.1 L523.3,504.6 L520.9,503.9 L518.4,503.0 L515.9,501.9 L513.4,500.6 L510.9,499.2 L508.3,497.6 L505.8,495.8 L503.2,493.9 L500.7,491.8 L498.3,489.6 L495.9,487.3 L493.6,484.9 L491.3,482.4 L489.2,479.8 L487.1,477.1 L485.2,474.4 L483.3,471.6 L481.6,468.8 L480.1,466.0 L478.6,463.1 L477.4,460.3 L476.2,457.5 L475.3,454.7 L474.5,452.0 L473.9,449.4 L473.5,446.8 L473.2,444.3 L473.1,441.9 L473.2,439.6 L473.5,437.5 L473.9,435.5 L474.5,433.6 L475.3,431.9 L476.3,430.3 L477.4,428.9 Z" fill="url(#gHoleL)" stroke="none"/>
<g clip-path="url(#cHoleL)"><path d="M506.2,409.7 L507.6,408.7 L509.2,407.8 L510.9,407.2 L512.7,406.7 L514.7,406.5 L516.7,406.4 L518.9,406.5 L521.2,406.8 L523.5,407.4 L525.9,408.1 L528.3,409.0 L530.8,410.1 L533.4,411.4 L535.9,412.8 L538.5,414.4 L541.0,416.2 L543.5,418.1 L546.0,420.2 L548.5,422.4 L550.9,424.7 L553.2,427.1 L555.4,429.6 L557.6,432.2 L559.7,434.9 L561.6,437.6 L563.4,440.4 L565.1,443.2 L566.7,446.0 L568.1,448.9 L569.4,451.7 L570.5,454.5 L571.5,457.3 L572.3,460.0 L572.9,462.6 L573.3,465.2 L573.6,467.7 L573.7,470.1 L573.6,472.4 L573.3,474.5 L572.9,476.5 L572.2,478.4 L571.4,480.1 L570.5,481.7 L569.4,483.1 L568.1,484.3 L566.7,485.3 L565.1,486.2 L563.4,486.8 L561.5,487.3 L559.6,487.5 L557.5,487.6 L555.4,487.5 L553.1,487.1 L550.8,486.6 L548.4,485.9 L545.9,485.0 L543.4,483.9 L540.9,482.6 L538.4,481.2 L535.8,479.6 L533.3,477.8 L530.7,475.9 L528.2,473.8 L525.8,471.6 L523.4,469.3 L521.1,466.9 L518.8,464.4 L516.7,461.8 L514.6,459.1 L512.7,456.4 L510.8,453.6 L509.1,450.8 L507.6,448.0 L506.1,445.1 L504.9,442.3 L503.7,439.5 L502.8,436.7 L502.0,434.0 L501.4,431.4 L501.0,428.8 L500.7,426.3 L500.6,423.9 L500.7,421.6 L501.0,419.5 L501.4,417.5 L502.0,415.6 L502.8,413.9 L503.8,412.3 L504.9,410.9 Z" fill="#95c7fa" stroke="#0d5d7c" stroke-width="1"/></g>
<path d="M514,500 L541,486 M522,504 L544,492" stroke="#0d5d7c" stroke-width="0.8" fill="none"/>
<path d="M478.7,427.7 L480.1,426.7 L481.7,425.8 L483.4,425.2 L485.2,424.7 L487.2,424.5 L489.2,424.4 L491.4,424.5 L493.7,424.8 L496.0,425.4 L498.4,426.1 L500.8,427.0 L503.3,428.1 L505.9,429.4 L508.4,430.8 L511.0,432.4 L513.5,434.2 L516.0,436.1 L518.5,438.2 L521.0,440.4 L523.4,442.7 L525.7,445.1 L527.9,447.6 L530.1,450.2 L532.2,452.9 L534.1,455.6 L535.9,458.4 L537.6,461.2 L539.2,464.0 L540.6,466.9 L541.9,469.7 L543.0,472.5 L544.0,475.3 L544.8,478.0 L545.4,480.6 L545.8,483.2 L546.1,485.7 L546.2,488.1 L546.1,490.4 L545.8,492.5 L545.4,494.5 L544.7,496.4 L543.9,498.1 L543.0,499.7 L541.9,501.1 L540.6,502.3 L539.2,503.3 L537.6,504.2 L535.9,504.8 L534.0,505.3 L532.1,505.5 L530.0,505.6 L527.9,505.5 L525.6,505.1 L523.3,504.6 L520.9,503.9 L518.4,503.0 L515.9,501.9 L513.4,500.6 L510.9,499.2 L508.3,497.6 L505.8,495.8 L503.2,493.9 L500.7,491.8 L498.3,489.6 L495.9,487.3 L493.6,484.9 L491.3,482.4 L489.2,479.8 L487.1,477.1 L485.2,474.4 L483.3,471.6 L481.6,468.8 L480.1,466.0 L478.6,463.1 L477.4,460.3 L476.2,457.5 L475.3,454.7 L474.5,452.0 L473.9,449.4 L473.5,446.8 L473.2,444.3 L473.1,441.9 L473.2,439.6 L473.5,437.5 L473.9,435.5 L474.5,433.6 L475.3,431.9 L476.3,430.3 L477.4,428.9 Z" fill="none" stroke="#0d5d7c" stroke-width="1"/>
<path d="M389.7,340.5 L455.8,301.0 L459.7,302.3 L398.8,338.0 L394.0,337.5 Z" fill="#e2e040" stroke="#0d5d7c" stroke-width="0.9"/>
<path d="M920.3,672.8 L966.7,698.9 L966.7,813.6 L920.3,838.6 Z" fill="#6e6c13" stroke="#0d5d7c" stroke-width="1"/>
<path d="M920.3,838.6 L966.7,813.6 L1072.2,872.0 L1072.2,926.0 Z" fill="#d5d329" stroke="#0d5d7c" stroke-width="1"/>
<path d="M966.7,698.9 L1050.0,745.6 L1072.2,785.8 L1072.2,872.0 L966.7,813.6 Z" fill="#7a7915" stroke="#0d5d7c" stroke-width="1"/>
<g clip-path="url(#cPocketR)"><path d="M1043.2,754.0 L1044.6,753.0 L1046.2,752.1 L1047.9,751.5 L1049.7,751.0 L1051.7,750.8 L1053.7,750.7 L1055.9,750.8 L1058.2,751.1 L1060.5,751.7 L1062.9,752.4 L1065.3,753.3 L1067.8,754.4 L1070.4,755.7 L1072.9,757.1 L1075.5,758.7 L1078.0,760.5 L1080.5,762.4 L1083.0,764.5 L1085.5,766.7 L1087.9,769.0 L1090.2,771.4 L1092.4,773.9 L1094.6,776.5 L1096.7,779.2 L1098.6,781.9 L1100.4,784.7 L1102.1,787.5 L1103.7,790.3 L1105.1,793.2 L1106.4,796.0 L1107.5,798.8 L1108.5,801.6 L1109.3,804.3 L1109.9,806.9 L1110.3,809.5 L1110.6,812.0 L1110.7,814.4 L1110.6,816.7 L1110.3,818.8 L1109.9,820.8 L1109.2,822.7 L1108.4,824.4 L1107.5,826.0 L1106.4,827.4 L1105.1,828.6 L1103.7,829.6 L1102.1,830.5 L1100.4,831.1 L1098.5,831.6 L1096.6,831.8 L1094.5,831.9 L1092.4,831.8 L1090.1,831.4 L1087.8,830.9 L1085.4,830.2 L1082.9,829.3 L1080.4,828.2 L1077.9,826.9 L1075.4,825.5 L1072.8,823.9 L1070.3,822.1 L1067.7,820.2 L1065.2,818.1 L1062.8,815.9 L1060.4,813.6 L1058.1,811.2 L1055.8,808.7 L1053.7,806.1 L1051.6,803.4 L1049.7,800.7 L1047.8,797.9 L1046.1,795.1 L1044.6,792.3 L1043.1,789.4 L1041.9,786.6 L1040.7,783.8 L1039.8,781.0 L1039.0,778.3 L1038.4,775.7 L1038.0,773.1 L1037.7,770.6 L1037.6,768.2 L1037.7,765.9 L1038.0,763.8 L1038.4,761.8 L1039.0,759.9 L1039.8,758.2 L1040.8,756.6 L1041.9,755.2 Z" fill="url(#gHoleR)" stroke="#0d5d7c" stroke-width="1"/></g>
<path d="M1050,745.6 L1072.2,785.8 L1072.2,872" stroke="#0d5d7c" stroke-width="1" fill="none"/>
<path d="M701.3,418.2 L701.9,413.8 L702.7,409.4 L703.9,405.1 L705.3,400.8 L707.1,396.5 L709.2,392.3 L711.5,388.2 L714.2,384.1 L717.1,380.1 L720.4,376.2 L723.9,372.3 L727.7,368.6 L731.8,364.9 L736.1,361.3 L740.7,357.8 L745.6,354.4 L750.7,351.1 L756.0,348.0 L761.6,344.9 L767.5,342.0 L773.5,339.1 L779.8,336.4 L786.3,333.9 L793.0,331.4 L799.9,329.1 L807.0,327.0 L814.2,324.9 L821.6,323.0 L829.2,321.3 L836.9,319.7 L844.8,318.2 L852.8,316.9 L860.9,315.8 L869.2,314.8 L877.5,313.9 L886.0,313.2 L894.5,312.7 L903.1,312.3 L911.7,312.1 L920.4,312.0 L929.1,312.1 L937.9,312.3 L946.7,312.7 L955.5,313.3 L964.2,314.0 L973.0,314.9 L981.8,315.9 L990.5,317.0 L999.1,318.4 L1007.8,319.8 L1016.3,321.5 L1024.8,323.2 L1033.1,325.1 L1041.4,327.2 L1049.6,329.4 L1057.7,331.7 L1065.6,334.1 L1073.4,336.7 L1081.0,339.4 L1088.5,342.3 L1095.8,345.2 L1103.0,348.3 L1109.9,351.5 L1116.7,354.8 L1123.3,358.2 L1129.6,361.7 L1135.8,365.3 L1141.7,369.0 L1147.4,372.7 L1152.9,376.6 L1158.1,380.5 L1163.1,384.5 L1167.8,388.6 L1172.2,392.8 L1176.4,397.0 L1180.3,401.2 L1183.9,405.5 L1187.3,409.9 L1190.4,414.2 L1193.1,418.7 L1195.6,423.1 L1197.8,427.6 L1199.7,432.0 L1201.3,436.5 L1202.6,441.0 L1203.6,445.5 L1204.2,450.0 L1204.6,454.5 L1204.7,458.9 L1204.4,463.4 L1203.9,467.8 L1203.0,472.2 L1201.8,476.5 L1200.4,480.8 L1198.6,485.1 L1196.5,489.3 L1194.2,493.4 L1191.5,497.5 L1188.6,501.5 L1185.3,505.4 L1181.8,509.2 L1178.0,513.0 L1174.0,516.7 L1169.6,520.3 L1165.0,523.8 L1160.2,527.1 L1155.0,530.4 L1149.7,533.6 L1144.1,536.7 L1138.2,539.6 L1132.2,542.4 L1125.9,545.1 L1119.4,547.7 L1112.7,550.1 L1105.8,552.4 L1098.8,554.6 L1091.5,556.6 L1084.1,558.5 L1076.5,560.3 L1068.8,561.9 L1060.9,563.3 L1052.9,564.7 L1044.8,565.8 L1036.5,566.8 L1028.2,567.7 L1019.8,568.4 L1011.2,568.9 L1002.7,569.3 L994.0,569.5 L985.3,569.6 L976.6,569.5 L967.8,569.2 L959.0,568.8 L950.3,568.3 L941.5,567.6 L932.7,566.7 L923.9,565.7 L915.2,564.5 L906.6,563.2 L898.0,561.7 L889.4,560.1 L880.9,558.3 L872.6,556.4 L864.3,554.4 L856.1,552.2 L848.1,549.9 L840.1,547.4 L832.3,544.8 L824.7,542.1 L817.2,539.3 L809.9,536.3 L802.7,533.3 L795.8,530.1 L789.0,526.8 L782.4,523.4 L776.1,519.9 L769.9,516.3 L764.0,512.6 L758.3,508.8 L752.8,505.0 L747.6,501.0 L742.6,497.0 L737.9,493.0 L733.5,488.8 L729.3,484.6 L725.4,480.4 L721.8,476.1 L718.4,471.7 L715.4,467.3 L712.6,462.9 L710.1,458.5 L707.9,454.0 L706.0,449.5 L704.4,445.0 L703.1,440.5 L702.2,436.1 L701.5,431.6 L701.1,427.1 L701.1,422.6 Z" fill="url(#gFloor)" stroke="#0d5d7c" stroke-width="1"/>
<path d="M701.3,418.2 L701.9,413.8 L702.7,409.4 L703.9,405.1 L705.3,400.8 L707.1,396.5 L709.2,392.3 L711.5,388.2 L714.2,384.1 L717.1,380.1 L720.4,376.2 L723.9,372.3 L727.7,368.6 L731.8,364.9 L736.1,361.3 L740.7,357.8 L745.6,354.4 L750.7,351.1 L756.0,348.0 L761.6,344.9 L767.5,342.0 L773.5,339.1 L779.8,336.4 L786.3,333.9 L793.0,331.4 L799.9,329.1 L807.0,327.0 L814.2,324.9 L821.6,323.0 L829.2,321.3 L836.9,319.7 L844.8,318.2 L852.8,316.9 L860.9,315.8 L869.2,314.8 L877.5,313.9 L886.0,313.2 L894.5,312.7 L903.1,312.3 L911.7,312.1 L920.4,312.0 L929.1,312.1 L937.9,312.3 L946.7,312.7 L955.5,313.3 L964.2,314.0 L973.0,314.9 L981.8,315.9 L990.5,317.0 L999.1,318.4 L1007.8,319.8 L1016.3,321.5 L1024.8,323.2 L1033.1,325.1 L1041.4,327.2 L1049.6,329.4 L1057.7,331.7 L1065.6,334.1 L1073.4,336.7 L1081.0,339.4 L1088.5,342.3 L1095.8,345.2 L1103.0,348.3 L1109.9,351.5 L1116.7,354.8 L1123.3,358.2 L1129.6,361.7 L1135.8,365.3 L1141.7,369.0 L1147.4,372.7 L1152.9,376.6 L1158.1,380.5 L1163.1,384.5 L1167.8,388.6 L1172.2,392.8 L1176.4,397.0 L1180.3,401.2 L1183.9,405.5 L1187.3,409.9 L1190.4,414.2 L1193.1,418.7 L1195.6,423.1 L1197.8,427.6 L1199.7,432.0 L1201.3,436.5 L1202.6,441.0 L1203.6,445.5 L1204.2,450.0 L1204.6,454.5 L1204.7,458.9 L1204.4,463.4 L1203.9,467.8 L1203.0,472.2 L1201.8,476.5 L1200.4,480.8 L1198.6,485.1 L1196.5,489.3 L1194.2,493.4 L1191.5,497.5 L1188.6,501.5 L1185.3,505.4 L1181.8,509.2 L1178.0,513.0 L1174.0,516.7 L1169.6,520.3 L1165.0,523.8 L1160.2,527.1 L1155.0,530.4 L1149.7,533.6 L1144.1,536.7 L1138.2,539.6 L1132.2,542.4 L1125.9,545.1 L1119.4,547.7 L1112.7,550.1 L1105.8,552.4 L1098.8,554.6 L1091.5,556.6 L1084.1,558.5 L1076.5,560.3 L1068.8,561.9 L1060.9,563.3 L1052.9,564.7 L1044.8,565.8 L1036.5,566.8 L1028.2,567.7 L1019.8,568.4 L1011.2,568.9 L1002.7,569.3 L994.0,569.5 L985.3,569.6 L976.6,569.5 L967.8,569.2 L959.0,568.8 L950.3,568.3 L941.5,567.6 L932.7,566.7 L923.9,565.7 L915.2,564.5 L906.6,563.2 L898.0,561.7 L889.4,560.1 L880.9,558.3 L872.6,556.4 L864.3,554.4 L856.1,552.2 L848.1,549.9 L840.1,547.4 L832.3,544.8 L824.7,542.1 L817.2,539.3 L809.9,536.3 L802.7,533.3 L795.8,530.1 L789.0,526.8 L782.4,523.4 L776.1,519.9 L769.9,516.3 L764.0,512.6 L758.3,508.8 L752.8,505.0 L747.6,501.0 L742.6,497.0 L737.9,493.0 L733.5,488.8 L729.3,484.6 L725.4,480.4 L721.8,476.1 L718.4,471.7 L715.4,467.3 L712.6,462.9 L710.1,458.5 L707.9,454.0 L706.0,449.5 L704.4,445.0 L703.1,440.5 L702.2,436.1 L701.5,431.6 L701.1,427.1 L701.1,422.6 Z M704.0,485.3 L704.2,480.3 L704.7,475.3 L705.5,470.3 L706.6,465.4 L708.0,460.4 L709.7,455.5 L711.7,450.7 L714.0,445.9 L716.6,441.1 L719.5,436.4 L722.6,431.8 L726.1,427.2 L729.8,422.7 L733.8,418.3 L738.1,413.9 L742.6,409.7 L747.4,405.5 L752.5,401.5 L757.8,397.5 L763.3,393.7 L769.1,389.9 L775.1,386.3 L781.3,382.8 L787.7,379.5 L794.3,376.3 L801.1,373.2 L808.1,370.2 L815.3,367.4 L822.7,364.7 L830.2,362.2 L837.9,359.8 L845.7,357.6 L853.6,355.6 L861.7,353.7 L869.9,352.0 L878.1,350.4 L886.5,349.0 L895.0,347.8 L903.5,346.7 L912.1,345.8 L920.7,345.1 L929.4,344.6 L938.1,344.2 L946.9,344.0 L955.6,344.0 L964.4,344.2 L973.1,344.5 L981.8,345.0 L990.5,345.7 L999.1,346.5 L1007.7,347.6 L1016.2,348.7 L1024.6,350.1 L1033.0,351.6 L1041.2,353.3 L1049.4,355.2 L1057.4,357.2 L1065.3,359.4 L1073.1,361.7 L1080.7,364.2 L1088.2,366.8 L1095.5,369.6 L1102.7,372.5 L1109.6,375.6 L1116.4,378.8 L1123.0,382.1 L1129.3,385.6 L1135.5,389.2 L1141.4,392.9 L1147.1,396.7 L1152.6,400.6 L1157.8,404.7 L1162.8,408.8 L1167.5,413.0 L1172.0,417.4 L1176.2,421.8 L1180.2,426.3 L1183.8,430.8 L1187.2,435.4 L1190.3,440.1 L1193.1,444.9 L1195.6,449.7 L1197.8,454.5 L1199.8,459.4 L1201.4,464.4 L1202.7,469.3 L1203.8,474.3 L1204.5,479.3 L1204.9,484.3 L1205.0,489.3 L1204.8,494.3 L1204.3,499.2 L1203.5,504.2 L1202.4,509.2 L1201.0,514.1 L1199.3,519.0 L1197.3,523.9 L1195.0,528.7 L1192.4,533.4 L1189.5,538.1 L1186.3,542.8 L1182.9,547.4 L1179.2,551.9 L1175.2,556.3 L1170.9,560.6 L1166.3,564.9 L1161.5,569.0 L1156.5,573.1 L1151.2,577.0 L1145.7,580.9 L1139.9,584.6 L1133.9,588.2 L1127.7,591.7 L1121.3,595.1 L1114.6,598.3 L1107.8,601.4 L1100.8,604.3 L1093.6,607.2 L1086.3,609.8 L1078.8,612.3 L1071.1,614.7 L1063.3,616.9 L1055.3,619.0 L1047.3,620.9 L1039.1,622.6 L1030.8,624.1 L1022.4,625.5 L1014.0,626.8 L1005.5,627.8 L996.9,628.7 L988.2,629.4 L979.5,630.0 L970.8,630.3 L962.1,630.5 L953.4,630.5 L944.6,630.4 L935.9,630.1 L927.2,629.6 L918.5,628.9 L909.9,628.0 L901.3,627.0 L892.8,625.8 L884.3,624.4 L876.0,622.9 L867.7,621.2 L859.6,619.4 L851.6,617.4 L843.6,615.2 L835.9,612.8 L828.2,610.4 L820.8,607.7 L813.5,604.9 L806.3,602.0 L799.4,599.0 L792.6,595.7 L786.0,592.4 L779.6,589.0 L773.5,585.4 L767.6,581.7 L761.8,577.8 L756.4,573.9 L751.1,569.9 L746.2,565.7 L741.4,561.5 L737.0,557.2 L732.8,552.8 L728.8,548.3 L725.2,543.7 L721.8,539.1 L718.7,534.4 L715.9,529.7 L713.4,524.9 L711.1,520.0 L709.2,515.1 L707.6,510.2 L706.2,505.2 L705.2,500.3 L704.5,495.3 L704.1,490.3 Z" fill="url(#gWall)" fill-rule="evenodd" clip-path="url(#cRim)" stroke="none"/>
<g clip-path="url(#cRim)"><path d="M704.0,485.3 L704.2,480.3 L704.7,475.3 L705.5,470.3 L706.6,465.4 L708.0,460.4 L709.7,455.5 L711.7,450.7 L714.0,445.9 L716.6,441.1 L719.5,436.4 L722.6,431.8 L726.1,427.2 L729.8,422.7 L733.8,418.3 L738.1,413.9 L742.6,409.7 L747.4,405.5 L752.5,401.5 L757.8,397.5 L763.3,393.7 L769.1,389.9 L775.1,386.3 L781.3,382.8 L787.7,379.5 L794.3,376.3 L801.1,373.2 L808.1,370.2 L815.3,367.4 L822.7,364.7 L830.2,362.2 L837.9,359.8 L845.7,357.6 L853.6,355.6 L861.7,353.7 L869.9,352.0 L878.1,350.4 L886.5,349.0 L895.0,347.8 L903.5,346.7 L912.1,345.8 L920.7,345.1 L929.4,344.6 L938.1,344.2 L946.9,344.0 L955.6,344.0 L964.4,344.2 L973.1,344.5 L981.8,345.0 L990.5,345.7 L999.1,346.5 L1007.7,347.6 L1016.2,348.7 L1024.6,350.1 L1033.0,351.6 L1041.2,353.3 L1049.4,355.2 L1057.4,357.2 L1065.3,359.4 L1073.1,361.7 L1080.7,364.2 L1088.2,366.8 L1095.5,369.6 L1102.7,372.5 L1109.6,375.6 L1116.4,378.8 L1123.0,382.1 L1129.3,385.6 L1135.5,389.2 L1141.4,392.9 L1147.1,396.7 L1152.6,400.6 L1157.8,404.7 L1162.8,408.8 L1167.5,413.0 L1172.0,417.4 L1176.2,421.8 L1180.2,426.3 L1183.8,430.8 L1187.2,435.4 L1190.3,440.1 L1193.1,444.9 L1195.6,449.7 L1197.8,454.5 L1199.8,459.4 L1201.4,464.4 L1202.7,469.3 L1203.8,474.3 L1204.5,479.3 L1204.9,484.3 L1205.0,489.3 L1204.8,494.3 L1204.3,499.2 L1203.5,504.2 L1202.4,509.2 L1201.0,514.1 L1199.3,519.0 L1197.3,523.9 L1195.0,528.7 L1192.4,533.4 L1189.5,538.1 L1186.3,542.8 L1182.9,547.4 L1179.2,551.9 L1175.2,556.3 L1170.9,560.6 L1166.3,564.9 L1161.5,569.0 L1156.5,573.1 L1151.2,577.0 L1145.7,580.9 L1139.9,584.6 L1133.9,588.2 L1127.7,591.7 L1121.3,595.1 L1114.6,598.3 L1107.8,601.4 L1100.8,604.3 L1093.6,607.2 L1086.3,609.8 L1078.8,612.3 L1071.1,614.7 L1063.3,616.9 L1055.3,619.0 L1047.3,620.9 L1039.1,622.6 L1030.8,624.1 L1022.4,625.5 L1014.0,626.8 L1005.5,627.8 L996.9,628.7 L988.2,629.4 L979.5,630.0 L970.8,630.3 L962.1,630.5 L953.4,630.5 L944.6,630.4 L935.9,630.1 L927.2,629.6 L918.5,628.9 L909.9,628.0 L901.3,627.0 L892.8,625.8 L884.3,624.4 L876.0,622.9 L867.7,621.2 L859.6,619.4 L851.6,617.4 L843.6,615.2 L835.9,612.8 L828.2,610.4 L820.8,607.7 L813.5,604.9 L806.3,602.0 L799.4,599.0 L792.6,595.7 L786.0,592.4 L779.6,589.0 L773.5,585.4 L767.6,581.7 L761.8,577.8 L756.4,573.9 L751.1,569.9 L746.2,565.7 L741.4,561.5 L737.0,557.2 L732.8,552.8 L728.8,548.3 L725.2,543.7 L721.8,539.1 L718.7,534.4 L715.9,529.7 L713.4,524.9 L711.1,520.0 L709.2,515.1 L707.6,510.2 L706.2,505.2 L705.2,500.3 L704.5,495.3 L704.1,490.3 Z" fill="none" stroke="#0d5d7c" stroke-width="1"/></g>
<path d="M701.3,418.2 L701.9,413.8 L702.7,409.4 L703.9,405.1 L705.3,400.8 L707.1,396.5 L709.2,392.3 L711.5,388.2 L714.2,384.1 L717.1,380.1 L720.4,376.2 L723.9,372.3 L727.7,368.6 L731.8,364.9 L736.1,361.3 L740.7,357.8 L745.6,354.4 L750.7,351.1 L756.0,348.0 L761.6,344.9 L767.5,342.0 L773.5,339.1 L779.8,336.4 L786.3,333.9 L793.0,331.4 L799.9,329.1 L807.0,327.0 L814.2,324.9 L821.6,323.0 L829.2,321.3 L836.9,319.7 L844.8,318.2 L852.8,316.9 L860.9,315.8 L869.2,314.8 L877.5,313.9 L886.0,313.2 L894.5,312.7 L903.1,312.3 L911.7,312.1 L920.4,312.0 L929.1,312.1 L937.9,312.3 L946.7,312.7 L955.5,313.3 L964.2,314.0 L973.0,314.9 L981.8,315.9 L990.5,317.0 L999.1,318.4 L1007.8,319.8 L1016.3,321.5 L1024.8,323.2 L1033.1,325.1 L1041.4,327.2 L1049.6,329.4 L1057.7,331.7 L1065.6,334.1 L1073.4,336.7 L1081.0,339.4 L1088.5,342.3 L1095.8,345.2 L1103.0,348.3 L1109.9,351.5 L1116.7,354.8 L1123.3,358.2 L1129.6,361.7 L1135.8,365.3 L1141.7,369.0 L1147.4,372.7 L1152.9,376.6 L1158.1,380.5 L1163.1,384.5 L1167.8,388.6 L1172.2,392.8 L1176.4,397.0 L1180.3,401.2 L1183.9,405.5 L1187.3,409.9 L1190.4,414.2 L1193.1,418.7 L1195.6,423.1 L1197.8,427.6 L1199.7,432.0 L1201.3,436.5 L1202.6,441.0 L1203.6,445.5 L1204.2,450.0 L1204.6,454.5 L1204.7,458.9 L1204.4,463.4 L1203.9,467.8 L1203.0,472.2 L1201.8,476.5 L1200.4,480.8 L1198.6,485.1 L1196.5,489.3 L1194.2,493.4 L1191.5,497.5 L1188.6,501.5 L1185.3,505.4 L1181.8,509.2 L1178.0,513.0 L1174.0,516.7 L1169.6,520.3 L1165.0,523.8 L1160.2,527.1 L1155.0,530.4 L1149.7,533.6 L1144.1,536.7 L1138.2,539.6 L1132.2,542.4 L1125.9,545.1 L1119.4,547.7 L1112.7,550.1 L1105.8,552.4 L1098.8,554.6 L1091.5,556.6 L1084.1,558.5 L1076.5,560.3 L1068.8,561.9 L1060.9,563.3 L1052.9,564.7 L1044.8,565.8 L1036.5,566.8 L1028.2,567.7 L1019.8,568.4 L1011.2,568.9 L1002.7,569.3 L994.0,569.5 L985.3,569.6 L976.6,569.5 L967.8,569.2 L959.0,568.8 L950.3,568.3 L941.5,567.6 L932.7,566.7 L923.9,565.7 L915.2,564.5 L906.6,563.2 L898.0,561.7 L889.4,560.1 L880.9,558.3 L872.6,556.4 L864.3,554.4 L856.1,552.2 L848.1,549.9 L840.1,547.4 L832.3,544.8 L824.7,542.1 L817.2,539.3 L809.9,536.3 L802.7,533.3 L795.8,530.1 L789.0,526.8 L782.4,523.4 L776.1,519.9 L769.9,516.3 L764.0,512.6 L758.3,508.8 L752.8,505.0 L747.6,501.0 L742.6,497.0 L737.9,493.0 L733.5,488.8 L729.3,484.6 L725.4,480.4 L721.8,476.1 L718.4,471.7 L715.4,467.3 L712.6,462.9 L710.1,458.5 L707.9,454.0 L706.0,449.5 L704.4,445.0 L703.1,440.5 L702.2,436.1 L701.5,431.6 L701.1,427.1 L701.1,422.6 Z" fill="none" stroke="#0d5d7c" stroke-width="1.1"/>
<g clip-path="url(#cRim)"><path d="M793.0,436.2 L792.9,433.0 L793.1,429.8 L793.4,426.6 L794.0,423.4 L794.7,420.3 L795.7,417.2 L796.8,414.1 L798.1,411.0 L799.6,407.9 L801.3,404.9 L803.2,402.0 L805.3,399.0 L807.5,396.1 L810.0,393.3 L812.6,390.5 L815.4,387.8 L818.3,385.1 L821.4,382.5 L824.7,380.0 L828.2,377.5 L831.8,375.1 L835.5,372.8 L839.4,370.5 L843.4,368.3 L847.6,366.3 L851.9,364.2 L856.3,362.3 L860.8,360.5 L865.5,358.8 L870.3,357.1 L875.1,355.6 L880.1,354.1 L885.1,352.8 L890.3,351.6 L895.5,350.4 L900.8,349.4 L906.2,348.4 L911.6,347.6 L917.1,346.9 L922.6,346.3 L928.1,345.8 L933.7,345.4 L939.3,345.1 L945.0,345.0 L950.6,344.9 L956.3,345.0 L961.9,345.1 L967.6,345.4 L973.2,345.8 L978.8,346.3 L984.4,346.9 L989.9,347.6 L995.4,348.4 L1000.9,349.4 L1006.3,350.4 L1011.6,351.6 L1016.9,352.8 L1022.1,354.1 L1027.2,355.6 L1032.2,357.1 L1037.1,358.8 L1042.0,360.5 L1046.7,362.3 L1051.3,364.2 L1055.8,366.2 L1060.2,368.3 L1064.4,370.5 L1068.6,372.8 L1072.5,375.1 L1076.4,377.5 L1080.1,380.0 L1083.6,382.5 L1087.0,385.1 L1090.2,387.8 L1093.3,390.5 L1096.2,393.3 L1098.9,396.1 L1101.4,399.0 L1103.8,401.9 L1106.0,404.9 L1108.0,407.9 L1109.8,411.0 L1111.4,414.1 L1112.9,417.2 L1114.1,420.3 L1115.2,423.4 L1116.1,426.6 L1116.7,429.8 L1117.2,433.0 L1117.5,436.1 L1117.5,490.1 L1117.6,493.3 L1117.4,496.5 L1117.1,499.7 L1116.6,502.9 L1115.9,506.1 L1115.0,509.2 L1113.9,512.3 L1112.6,515.4 L1111.1,518.5 L1109.4,521.5 L1107.5,524.5 L1105.5,527.5 L1103.2,530.4 L1100.8,533.2 L1098.2,536.0 L1095.5,538.8 L1092.5,541.5 L1089.4,544.1 L1086.1,546.6 L1082.7,549.1 L1079.1,551.6 L1075.3,553.9 L1071.5,556.2 L1067.4,558.4 L1063.2,560.5 L1058.9,562.5 L1054.5,564.4 L1050.0,566.2 L1045.3,568.0 L1040.5,569.6 L1035.6,571.2 L1030.7,572.7 L1025.6,574.0 L1020.4,575.3 L1015.2,576.4 L1009.9,577.5 L1004.5,578.4 L999.1,579.2 L993.6,579.9 L988.0,580.6 L982.5,581.1 L976.8,581.4 L971.2,581.7 L965.5,581.9 L959.9,582.0 L954.2,581.9 L948.5,581.7 L942.9,581.4 L937.2,581.1 L931.6,580.6 L926.0,579.9 L920.4,579.2 L914.9,578.4 L909.4,577.5 L904.0,576.4 L898.6,575.3 L893.4,574.0 L888.2,572.7 L883.0,571.2 L878.0,569.6 L873.0,568.0 L868.2,566.2 L863.5,564.4 L858.8,562.5 L854.3,560.5 L849.9,558.4 L845.7,556.2 L841.6,553.9 L837.6,551.6 L833.8,549.1 L830.1,546.7 L826.5,544.1 L823.2,541.5 L819.9,538.8 L816.9,536.0 L814.0,533.2 L811.3,530.4 L808.8,527.5 L806.4,524.5 L804.2,521.5 L802.2,518.5 L800.4,515.4 L798.8,512.3 L797.4,509.2 L796.2,506.1 L795.2,502.9 L794.3,499.7 L793.7,496.6 L793.2,493.4 L793.0,490.2 Z" fill="url(#gBearSide)" stroke="#0d5d7c" stroke-width="1"/></g>
<path d="M793.0,432.6 L793.1,429.4 L793.5,426.2 L794.1,423.1 L794.8,419.9 L795.8,416.8 L796.9,413.7 L798.3,410.6 L799.8,407.6 L801.6,404.5 L803.5,401.6 L805.6,398.6 L807.9,395.8 L810.3,392.9 L813.0,390.1 L815.8,387.4 L818.8,384.7 L821.9,382.1 L825.2,379.6 L828.7,377.1 L832.3,374.7 L836.1,372.4 L840.0,370.2 L844.1,368.0 L848.2,365.9 L852.6,363.9 L857.0,362.0 L861.6,360.2 L866.3,358.5 L871.1,356.9 L876.0,355.3 L881.0,353.9 L886.0,352.6 L891.2,351.3 L896.4,350.2 L901.8,349.2 L907.1,348.3 L912.6,347.5 L918.1,346.8 L923.6,346.2 L929.2,345.7 L934.8,345.4 L940.4,345.1 L946.1,345.0 L951.7,344.9 L957.4,345.0 L963.1,345.2 L968.7,345.5 L974.3,345.9 L980.0,346.4 L985.5,347.0 L991.1,347.8 L996.6,348.6 L1002.0,349.6 L1007.4,350.7 L1012.8,351.8 L1018.0,353.1 L1023.2,354.5 L1028.3,355.9 L1033.3,357.5 L1038.3,359.2 L1043.1,360.9 L1047.8,362.8 L1052.4,364.7 L1056.9,366.7 L1061.2,368.8 L1065.4,371.0 L1069.5,373.3 L1073.5,375.7 L1077.3,378.1 L1081.0,380.6 L1084.5,383.1 L1087.8,385.8 L1091.0,388.5 L1094.0,391.2 L1096.9,394.0 L1099.6,396.9 L1102.1,399.8 L1104.4,402.7 L1106.5,405.7 L1108.5,408.7 L1110.3,411.8 L1111.8,414.9 L1113.2,418.0 L1114.4,421.2 L1115.4,424.3 L1116.3,427.5 L1116.9,430.7 L1117.3,433.9 L1117.5,437.1 L1117.5,440.3 L1117.4,443.4 L1117.0,446.6 L1116.4,449.8 L1115.7,452.9 L1114.7,456.1 L1113.5,459.2 L1112.2,462.3 L1110.7,465.3 L1108.9,468.3 L1107.0,471.3 L1104.9,474.2 L1102.6,477.1 L1100.2,479.9 L1097.5,482.7 L1094.7,485.5 L1091.7,488.1 L1088.6,490.7 L1085.3,493.3 L1081.8,495.7 L1078.2,498.1 L1074.4,500.5 L1070.5,502.7 L1066.4,504.9 L1062.2,506.9 L1057.9,508.9 L1053.5,510.8 L1048.9,512.7 L1044.2,514.4 L1039.4,516.0 L1034.5,517.5 L1029.5,519.0 L1024.5,520.3 L1019.3,521.5 L1014.0,522.6 L1008.7,523.7 L1003.4,524.6 L997.9,525.4 L992.4,526.1 L986.9,526.7 L981.3,527.1 L975.7,527.5 L970.1,527.8 L964.4,527.9 L958.8,527.9 L953.1,527.9 L947.4,527.7 L941.8,527.4 L936.1,527.0 L930.5,526.5 L924.9,525.8 L919.4,525.1 L913.9,524.2 L908.4,523.3 L903.1,522.2 L897.7,521.1 L892.5,519.8 L887.3,518.4 L882.2,516.9 L877.2,515.4 L872.2,513.7 L867.4,512.0 L862.7,510.1 L858.1,508.2 L853.6,506.1 L849.3,504.0 L845.1,501.8 L841.0,499.6 L837.0,497.2 L833.2,494.8 L829.5,492.3 L826.0,489.7 L822.7,487.1 L819.5,484.4 L816.5,481.7 L813.6,478.8 L810.9,476.0 L808.4,473.1 L806.1,470.1 L804.0,467.1 L802.0,464.1 L800.2,461.1 L798.6,458.0 L797.3,454.9 L796.1,451.7 L795.0,448.6 L794.2,445.4 L793.6,442.2 L793.2,439.0 L793.0,435.8 Z" fill="#a9a9ac" stroke="#0d5d7c" stroke-width="1"/>
<g clip-path="url(#cRim)"><path d="M1117.5,436.1 L1117.6,439.3 L1117.4,442.5 L1117.1,445.7 L1116.6,448.9 L1115.9,452.1 L1115.0,455.2 L1113.9,458.3 L1112.6,461.4 L1111.1,464.5 L1109.4,467.5 L1107.5,470.5 L1105.5,473.5 L1103.2,476.4 L1100.8,479.2 L1098.2,482.0 L1095.5,484.8 L1092.5,487.5 L1089.4,490.1 L1086.1,492.6 L1082.7,495.1 L1079.1,497.6 L1075.3,499.9 L1071.5,502.2 L1067.4,504.4 L1063.2,506.5 L1058.9,508.5 L1054.5,510.4 L1050.0,512.2 L1045.3,514.0 L1040.5,515.6 L1035.6,517.2 L1030.7,518.7 L1025.6,520.0 L1020.4,521.3 L1015.2,522.4 L1009.9,523.5 L1004.5,524.4 L999.1,525.2 L993.6,525.9 L988.0,526.6 L982.5,527.1 L976.8,527.4 L971.2,527.7 L965.5,527.9 L959.9,528.0 L954.2,527.9 L948.5,527.7 L942.9,527.4 L937.2,527.1 L931.6,526.6 L926.0,525.9 L920.4,525.2 L914.9,524.4 L909.4,523.5 L904.0,522.4 L898.6,521.3 L893.4,520.0 L888.2,518.7 L883.0,517.2 L878.0,515.6 L873.0,514.0 L868.2,512.2 L863.5,510.4 L858.8,508.5 L854.3,506.5 L849.9,504.4 L845.7,502.2 L841.6,499.9 L837.6,497.6 L833.8,495.1 L830.1,492.7 L826.5,490.1 L823.2,487.5 L819.9,484.8 L816.9,482.0 L814.0,479.2 L811.3,476.4 L808.8,473.5 L806.4,470.5 L804.2,467.5 L802.2,464.5 L800.4,461.4 L798.8,458.3 L797.4,455.2 L796.2,452.1 L795.2,448.9 L794.3,445.7 L793.7,442.6 L793.2,439.4 L793.0,436.2 L793.0,442.2 L793.2,445.4 L793.7,448.6 L794.3,451.7 L795.2,454.9 L796.2,458.1 L797.4,461.2 L798.8,464.3 L800.4,467.4 L802.2,470.5 L804.2,473.5 L806.4,476.5 L808.8,479.5 L811.3,482.4 L814.0,485.2 L816.9,488.0 L819.9,490.8 L823.2,493.5 L826.5,496.1 L830.1,498.7 L833.8,501.1 L837.6,503.6 L841.6,505.9 L845.7,508.2 L849.9,510.4 L854.3,512.5 L858.8,514.5 L863.5,516.4 L868.2,518.2 L873.0,520.0 L878.0,521.6 L883.0,523.2 L888.2,524.7 L893.4,526.0 L898.6,527.3 L904.0,528.4 L909.4,529.5 L914.9,530.4 L920.4,531.2 L926.0,531.9 L931.6,532.6 L937.2,533.1 L942.9,533.4 L948.5,533.7 L954.2,533.9 L959.9,534.0 L965.5,533.9 L971.2,533.7 L976.8,533.4 L982.5,533.1 L988.0,532.6 L993.6,531.9 L999.1,531.2 L1004.5,530.4 L1009.9,529.5 L1015.2,528.4 L1020.4,527.3 L1025.6,526.0 L1030.7,524.7 L1035.6,523.2 L1040.5,521.6 L1045.3,520.0 L1050.0,518.2 L1054.5,516.4 L1058.9,514.5 L1063.2,512.5 L1067.4,510.4 L1071.5,508.2 L1075.3,505.9 L1079.1,503.6 L1082.7,501.1 L1086.1,498.6 L1089.4,496.1 L1092.5,493.5 L1095.5,490.8 L1098.2,488.0 L1100.8,485.2 L1103.2,482.4 L1105.5,479.5 L1107.5,476.5 L1109.4,473.5 L1111.1,470.5 L1112.6,467.4 L1113.9,464.3 L1115.0,461.2 L1115.9,458.1 L1116.6,454.9 L1117.1,451.7 L1117.4,448.5 L1117.6,445.3 L1117.5,442.1 Z" fill="url(#gCham)" stroke="none"/></g>
<path d="M1117.5,442.1 L1117.6,445.3 L1117.4,448.5 L1117.1,451.7 L1116.6,454.9 L1115.9,458.1 L1115.0,461.2 L1113.9,464.3 L1112.6,467.4 L1111.1,470.5 L1109.4,473.5 L1107.5,476.5 L1105.5,479.5 L1103.2,482.4 L1100.8,485.2 L1098.2,488.0 L1095.5,490.8 L1092.5,493.5 L1089.4,496.1 L1086.1,498.6 L1082.7,501.1 L1079.1,503.6 L1075.3,505.9 L1071.5,508.2 L1067.4,510.4 L1063.2,512.5 L1058.9,514.5 L1054.5,516.4 L1050.0,518.2 L1045.3,520.0 L1040.5,521.6 L1035.6,523.2 L1030.7,524.7 L1025.6,526.0 L1020.4,527.3 L1015.2,528.4 L1009.9,529.5 L1004.5,530.4 L999.1,531.2 L993.6,531.9 L988.0,532.6 L982.5,533.1 L976.8,533.4 L971.2,533.7 L965.5,533.9 L959.9,534.0 L954.2,533.9 L948.5,533.7 L942.9,533.4 L937.2,533.1 L931.6,532.6 L926.0,531.9 L920.4,531.2 L914.9,530.4 L909.4,529.5 L904.0,528.4 L898.6,527.3 L893.4,526.0 L888.2,524.7 L883.0,523.2 L878.0,521.6 L873.0,520.0 L868.2,518.2 L863.5,516.4 L858.8,514.5 L854.3,512.5 L849.9,510.4 L845.7,508.2 L841.6,505.9 L837.6,503.6 L833.8,501.1 L830.1,498.7 L826.5,496.1 L823.2,493.5 L819.9,490.8 L816.9,488.0 L814.0,485.2 L811.3,482.4 L808.8,479.5 L806.4,476.5 L804.2,473.5 L802.2,470.5 L800.4,467.4 L798.8,464.3 L797.4,461.2 L796.2,458.1 L795.2,454.9 L794.3,451.7 L793.7,448.6 L793.2,445.4 L793.0,442.2" fill="none" stroke="#0d5d7c" stroke-width="0.9"/>
<path d="M793.0,432.6 L793.1,429.4 L793.5,426.2 L794.1,423.1 L794.8,419.9 L795.8,416.8 L796.9,413.7 L798.3,410.6 L799.8,407.6 L801.6,404.5 L803.5,401.6 L805.6,398.6 L807.9,395.8 L810.3,392.9 L813.0,390.1 L815.8,387.4 L818.8,384.7 L821.9,382.1 L825.2,379.6 L828.7,377.1 L832.3,374.7 L836.1,372.4 L840.0,370.2 L844.1,368.0 L848.2,365.9 L852.6,363.9 L857.0,362.0 L861.6,360.2 L866.3,358.5 L871.1,356.9 L876.0,355.3 L881.0,353.9 L886.0,352.6 L891.2,351.3 L896.4,350.2 L901.8,349.2 L907.1,348.3 L912.6,347.5 L918.1,346.8 L923.6,346.2 L929.2,345.7 L934.8,345.4 L940.4,345.1 L946.1,345.0 L951.7,344.9 L957.4,345.0 L963.1,345.2 L968.7,345.5 L974.3,345.9 L980.0,346.4 L985.5,347.0 L991.1,347.8 L996.6,348.6 L1002.0,349.6 L1007.4,350.7 L1012.8,351.8 L1018.0,353.1 L1023.2,354.5 L1028.3,355.9 L1033.3,357.5 L1038.3,359.2 L1043.1,360.9 L1047.8,362.8 L1052.4,364.7 L1056.9,366.7 L1061.2,368.8 L1065.4,371.0 L1069.5,373.3 L1073.5,375.7 L1077.3,378.1 L1081.0,380.6 L1084.5,383.1 L1087.8,385.8 L1091.0,388.5 L1094.0,391.2 L1096.9,394.0 L1099.6,396.9 L1102.1,399.8 L1104.4,402.7 L1106.5,405.7 L1108.5,408.7 L1110.3,411.8 L1111.8,414.9 L1113.2,418.0 L1114.4,421.2 L1115.4,424.3 L1116.3,427.5 L1116.9,430.7 L1117.3,433.9 L1117.5,437.1 L1117.5,440.3 L1117.4,443.4 L1117.0,446.6 L1116.4,449.8 L1115.7,452.9 L1114.7,456.1 L1113.5,459.2 L1112.2,462.3 L1110.7,465.3 L1108.9,468.3 L1107.0,471.3 L1104.9,474.2 L1102.6,477.1 L1100.2,479.9 L1097.5,482.7 L1094.7,485.5 L1091.7,488.1 L1088.6,490.7 L1085.3,493.3 L1081.8,495.7 L1078.2,498.1 L1074.4,500.5 L1070.5,502.7 L1066.4,504.9 L1062.2,506.9 L1057.9,508.9 L1053.5,510.8 L1048.9,512.7 L1044.2,514.4 L1039.4,516.0 L1034.5,517.5 L1029.5,519.0 L1024.5,520.3 L1019.3,521.5 L1014.0,522.6 L1008.7,523.7 L1003.4,524.6 L997.9,525.4 L992.4,526.1 L986.9,526.7 L981.3,527.1 L975.7,527.5 L970.1,527.8 L964.4,527.9 L958.8,527.9 L953.1,527.9 L947.4,527.7 L941.8,527.4 L936.1,527.0 L930.5,526.5 L924.9,525.8 L919.4,525.1 L913.9,524.2 L908.4,523.3 L903.1,522.2 L897.7,521.1 L892.5,519.8 L887.3,518.4 L882.2,516.9 L877.2,515.4 L872.2,513.7 L867.4,512.0 L862.7,510.1 L858.1,508.2 L853.6,506.1 L849.3,504.0 L845.1,501.8 L841.0,499.6 L837.0,497.2 L833.2,494.8 L829.5,492.3 L826.0,489.7 L822.7,487.1 L819.5,484.4 L816.5,481.7 L813.6,478.8 L810.9,476.0 L808.4,473.1 L806.1,470.1 L804.0,467.1 L802.0,464.1 L800.2,461.1 L798.6,458.0 L797.3,454.9 L796.1,451.7 L795.0,448.6 L794.2,445.4 L793.6,442.2 L793.2,439.0 L793.0,435.8 Z" fill="none" stroke="#0d5d7c" stroke-width="1"/>
<path d="M795.5,436.2 L795.4,433.0 L795.6,429.9 L795.9,426.8 L796.5,423.7 L797.2,420.7 L798.1,417.6 L799.2,414.6 L800.5,411.5 L802.0,408.6 L803.7,405.6 L805.5,402.7 L807.6,399.8 L809.8,397.0 L812.2,394.2 L814.8,391.5 L817.5,388.8 L820.4,386.2 L823.5,383.7 L826.7,381.2 L830.1,378.8 L833.6,376.4 L837.3,374.2 L841.1,371.9 L845.1,369.8 L849.2,367.8 L853.4,365.8 L857.8,364.0 L862.2,362.2 L866.8,360.5 L871.5,358.9 L876.3,357.4 L881.2,355.9 L886.2,354.6 L891.2,353.4 L896.4,352.3 L901.6,351.3 L906.9,350.4 L912.2,349.6 L917.6,348.9 L923.0,348.3 L928.5,347.8 L934.0,347.4 L939.5,347.1 L945.1,347.0 L950.6,346.9 L956.2,347.0 L961.8,347.1 L967.3,347.4 L972.9,347.8 L978.4,348.3 L983.9,348.9 L989.3,349.6 L994.8,350.4 L1000.1,351.3 L1005.4,352.3 L1010.7,353.4 L1015.9,354.6 L1021.0,355.9 L1026.0,357.4 L1031.0,358.9 L1035.8,360.5 L1040.6,362.2 L1045.2,363.9 L1049.8,365.8 L1054.2,367.8 L1058.5,369.8 L1062.7,371.9 L1066.8,374.1 L1070.7,376.4 L1074.5,378.8 L1078.1,381.2 L1081.6,383.7 L1084.9,386.2 L1088.1,388.8 L1091.1,391.5 L1094.0,394.2 L1096.6,397.0 L1099.1,399.8 L1101.5,402.7 L1103.6,405.6 L1105.6,408.6 L1107.4,411.5 L1109.0,414.5 L1110.4,417.6 L1111.7,420.6 L1112.7,423.7 L1113.6,426.8 L1114.2,429.9 L1114.7,433.0 L1115.0,436.2" fill="none" stroke="#0d5d7c" stroke-width="0.7" opacity="0.8"/>
<path d="M821.7,432.2 L821.8,429.3 L822.2,426.4 L822.7,423.4 L823.4,420.5 L824.4,417.6 L825.5,414.7 L826.9,411.9 L828.4,409.1 L830.1,406.3 L832.1,403.6 L834.2,400.9 L836.5,398.3 L839.0,395.7 L841.7,393.2 L844.5,390.7 L847.5,388.3 L850.7,386.0 L854.1,383.7 L857.6,381.5 L861.2,379.4 L865.0,377.4 L869.0,375.4 L873.0,373.6 L877.2,371.8 L881.6,370.2 L886.0,368.6 L890.6,367.2 L895.2,365.8 L899.9,364.5 L904.8,363.4 L909.7,362.3 L914.6,361.4 L919.7,360.6 L924.8,359.8 L929.9,359.2 L935.1,358.7 L940.3,358.4 L945.5,358.1 L950.8,358.0 L956.0,357.9 L961.3,358.0 L966.6,358.2 L971.8,358.5 L977.0,359.0 L982.2,359.5 L987.3,360.2 L992.4,360.9 L997.4,361.8 L1002.4,362.8 L1007.3,363.9 L1012.1,365.1 L1016.8,366.4 L1021.4,367.8 L1026.0,369.4 L1030.4,371.0 L1034.7,372.7 L1038.9,374.5 L1042.9,376.4 L1046.9,378.3 L1050.6,380.4 L1054.3,382.5 L1057.8,384.8 L1061.1,387.1 L1064.2,389.4 L1067.2,391.9 L1070.1,394.3 L1072.7,396.9 L1075.2,399.5 L1077.5,402.2 L1079.5,404.9 L1081.4,407.6 L1083.2,410.4 L1084.7,413.3 L1086.0,416.1 L1087.1,419.0 L1088.0,421.9 L1088.7,424.8 L1089.2,427.8 L1089.5,430.7 L1089.6,433.6 L1089.5,436.6 L1089.1,439.5 L1088.6,442.5 L1087.9,445.4 L1086.9,448.3 L1085.8,451.1 L1084.5,454.0 L1082.9,456.8 L1081.2,459.6 L1079.2,462.3 L1077.1,465.0 L1074.8,467.6 L1072.3,470.2 L1069.6,472.7 L1066.8,475.2 L1063.8,477.6 L1060.6,479.9 L1057.2,482.2 L1053.7,484.4 L1050.1,486.5 L1046.3,488.5 L1042.3,490.4 L1038.3,492.3 L1034.1,494.0 L1029.7,495.7 L1025.3,497.3 L1020.8,498.7 L1016.1,500.1 L1011.4,501.4 L1006.5,502.5 L1001.6,503.6 L996.7,504.5 L991.6,505.3 L986.5,506.0 L981.4,506.6 L976.2,507.1 L971.0,507.5 L965.8,507.8 L960.5,507.9 L955.3,508.0 L950.0,507.9 L944.8,507.7 L939.5,507.3 L934.3,506.9 L929.1,506.4 L924.0,505.7 L918.9,504.9 L913.9,504.1 L908.9,503.1 L904.0,502.0 L899.2,500.8 L894.5,499.5 L889.9,498.0 L885.3,496.5 L880.9,494.9 L876.6,493.2 L872.4,491.4 L868.4,489.5 L864.4,487.5 L860.7,485.5 L857.0,483.3 L853.6,481.1 L850.2,478.8 L847.1,476.5 L844.1,474.0 L841.2,471.5 L838.6,469.0 L836.1,466.4 L833.9,463.7 L831.8,461.0 L829.9,458.2 L828.2,455.5 L826.6,452.6 L825.3,449.8 L824.2,446.9 L823.3,444.0 L822.6,441.1 L822.1,438.1 L821.8,435.2 Z" fill="#7d7d80" stroke="#0d5d7c" stroke-width="1"/>
<path d="M825.7,438.3 L825.8,435.4 L826.1,432.5 L826.7,429.6 L827.4,426.7 L828.3,423.8 L829.4,421.0 L830.7,418.2 L832.2,415.4 L833.9,412.7 L835.8,410.0 L837.8,407.3 L840.1,404.7 L842.5,402.2 L845.1,399.7 L847.8,397.3 L850.8,394.9 L853.9,392.6 L857.1,390.4 L860.5,388.2 L864.0,386.1 L867.7,384.1 L871.6,382.2 L875.5,380.4 L879.6,378.7 L883.8,377.0 L888.1,375.5 L892.5,374.0 L897.0,372.7 L901.6,371.4 L906.3,370.3 L911.0,369.3 L915.9,368.3 L920.8,367.5 L925.7,366.8 L930.7,366.2 L935.7,365.7 L940.8,365.4 L945.8,365.1 L950.9,365.0 L956.0,364.9 L961.1,365.0 L966.2,365.2 L971.3,365.5 L976.4,365.9 L981.4,366.5 L986.4,367.1 L991.3,367.9 L996.2,368.8 L1001.0,369.7 L1005.7,370.8 L1010.4,372.0 L1015.0,373.3 L1019.5,374.7 L1023.9,376.2 L1028.2,377.8 L1032.3,379.5 L1036.4,381.2 L1040.3,383.1 L1044.1,385.1 L1047.8,387.1 L1051.3,389.2 L1054.7,391.4 L1057.9,393.7 L1061.0,396.0 L1063.9,398.4 L1066.6,400.9 L1069.2,403.4 L1071.6,405.9 L1073.8,408.6 L1075.8,411.2 L1077.7,414.0 L1079.4,416.7 L1080.8,419.5 L1082.1,422.3 L1083.2,425.2 L1084.1,428.0 L1084.7,430.9 L1085.2,433.8 L1085.5,436.7 L1085.6,439.6 L1085.5,442.5 L1085.2,445.4 L1084.6,448.3 L1083.9,451.2 L1083.0,454.0 L1081.9,456.9 L1080.6,459.7 L1079.1,462.5 L1077.4,465.2 L1075.6,467.9 L1073.5,470.5 L1071.3,473.1 L1068.8,475.7 L1066.2,478.2 L1063.5,480.6 L1060.5,483.0 L1057.5,485.3 L1054.2,487.5 L1050.8,489.7 L1047.3,491.8 L1043.6,493.8 L1039.7,495.7 L1035.8,497.5 L1031.7,499.2 L1027.5,500.9 L1023.2,502.4 L1018.8,503.8 L1014.3,505.2 L1009.7,506.4 L1005.0,507.6 L1000.3,508.6 L995.4,509.5 L990.6,510.4 L985.6,511.1 L980.6,511.7 L975.6,512.1 L970.5,512.5 L965.5,512.8 L960.4,512.9 L955.3,513.0 L950.2,512.9 L945.1,512.7 L940.0,512.4 L934.9,511.9 L929.9,511.4 L924.9,510.7 L920.0,510.0 L915.1,509.1 L910.3,508.1 L905.6,507.1 L900.9,505.9 L896.3,504.6 L891.8,503.2 L887.4,501.7 L883.1,500.1 L879.0,498.4 L874.9,496.6 L871.0,494.8 L867.2,492.8 L863.5,490.8 L860.0,488.7 L856.6,486.5 L853.4,484.2 L850.3,481.9 L847.4,479.5 L844.7,477.0 L842.1,474.5 L839.7,471.9 L837.5,469.3 L835.5,466.6 L833.6,463.9 L832.0,461.2 L830.5,458.4 L829.2,455.6 L828.1,452.7 L827.3,449.8 L826.6,447.0 L826.1,444.1 L825.8,441.2 Z" fill="url(#gBore)" stroke="#0d5d7c" stroke-width="1"/>
<path d="M52.5,987 L52.5,972" stroke="#0000c0" stroke-width="1.2"/><path d="M52.5,963 L57.5,970 L56,973.5 L49,973.5 L47.5,970 Z" fill="#0000a8"/><text x="48.5" y="962" font-family='"Liberation Sans", sans-serif' font-size="10" font-weight="bold" fill="#3a50f0">Z</text><path d="M53,987 L65,979" stroke="#008000" stroke-width="1"/><path d="M63,974 L74,975.5 L71,984 L69.5,984.5 L63,981 Z" fill="#007a00"/><text x="73.5" y="977.5" font-family='"Liberation Sans", sans-serif' font-size="11" font-weight="bold" fill="#30e030">Y</text><path d="M53,988 L65,994" stroke="#b00000" stroke-width="1"/><path d="M63,992 L70,990 L74,999 L63,1001 Z" fill="#8a0000"/><text x="74" y="1006" font-family='"Liberation Sans", sans-serif' font-size="10" fill="#f05050">X</text>
<path d="M16,1053.5 L22,1052.7 L22,1058.8 L16,1058.8 Z M23,1052.5 L32,1051.3 L32,1058.8 L23,1058.8 Z M16,1059.8 L22,1059.8 L22,1066 L16,1065.2 Z M23,1059.8 L32,1059.8 L32,1067.5 L23,1066.2 Z" fill="#ffffff"/><circle cx="68" cy="1060" r="9" fill="none" stroke="#ffffff" stroke-width="2.6"/><rect x="368.5" y="1053" width="5" height="9" rx="2.5" fill="none" stroke="#b0b0b0" stroke-width="1"/><path d="M366.5,1059 Q366.5,1064 371,1064 Q375.5,1064 375.5,1059 M371,1064 L371,1067 M368,1067.5 L374,1067.5" fill="none" stroke="#b0b0b0" stroke-width="1"/><rect x="409.5" y="1053.5" width="13" height="13" fill="none" stroke="#ffffff" stroke-width="1.3"/><path d="M407.5,1055 L406,1055 L406,1065 L407.5,1065 M424.5,1055 L426,1055 L426,1065 L424.5,1065" fill="none" stroke="#ffffff" stroke-width="1"/><path d="M457,1062 Q458,1049 468,1049.5 Q477.5,1050 477,1061 L463,1061 Q463.5,1066.5 469,1066.5 Q473,1066.5 476,1064.5 L476,1069.5 Q472.5,1071.5 468,1071.5 Q459,1071 457,1062 Z M463,1058.5 L471.5,1058.5 Q471,1054 467,1054 Q463.5,1054.5 463,1058.5 Z" fill="#1a7ad8" fill-rule="evenodd"/><path d="M505,1055 L526,1055 L526,1071 L505,1072 Z" fill="#ffffff"/><path d="M510,1055 Q510,1048 515.5,1048 Q521,1048 521,1055" fill="none" stroke="#ffffff" stroke-width="1.3"/><path d="M510,1058 L515,1058 L515,1062.5 L510,1062.5 Z M516,1058 L521,1058 L521,1062.5 L516,1062.5 Z M510,1063.5 L515,1063.5 L515,1068 L510,1068 Z M516,1063.5 L521,1063.5 L521,1068 L516,1068 Z" fill="#03040a"/><rect x="556" y="1048" width="18" height="24" fill="#ffffff"/><rect x="558" y="1050" width="14" height="4.5" fill="#03040a"/><rect x="558" y="1057" width="3.5" height="3.5" fill="#03040a"/><rect x="563" y="1057" width="3.5" height="3.5" fill="#03040a"/><rect x="568" y="1057" width="3.5" height="3.5" fill="#03040a"/><rect x="558" y="1062" width="3.5" height="3.5" fill="#03040a"/><rect x="563" y="1062" width="3.5" height="3.5" fill="#03040a"/><rect x="568" y="1062" width="3.5" height="3.5" fill="#03040a"/><rect x="558" y="1067" width="3.5" height="3.5" fill="#03040a"/><rect x="563" y="1067" width="3.5" height="3.5" fill="#03040a"/><rect x="568" y="1067" width="3.5" height="3.5" fill="#03040a"/><circle cx="613" cy="1060" r="11" fill="#db4437"/><path d="M613,1060 L603.5,1065.5 A11,11 0 0 0 618.5,1069.5 Z" fill="#0f9d58"/><path d="M613,1060 L618.5,1069.5 A11,11 0 0 0 622.5,1054.5 L613,1054.5 Z" fill="#f4c20d"/><circle cx="613" cy="1060" r="5" fill="#ffffff"/><circle cx="613" cy="1060" r="4" fill="#4285f4"/><rect x="651" y="1048" width="24" height="24" rx="5" fill="#f5901e"/><path d="M656,1066 Q657,1054 664,1053 Q670,1053 671,1060 Q667,1057 663,1060 Q660,1063 663,1067 Z" fill="#ffffff" opacity="0.9"/><circle cx="666" cy="1066" r="3" fill="none" stroke="#fff" stroke-width="1.5"/><path d="M700,1052 L708,1052 L710,1054 L722,1054 L722,1070 L700,1070 Z" fill="#f0c040"/><path d="M700,1056 L722,1056" stroke="#e0a820" stroke-width="1"/><rect x="707" y="1063" width="9" height="7" fill="#2a8ad8"/><ellipse cx="759" cy="1055" rx="10" ry="6" fill="#c0b0b0" stroke="#d02020" stroke-width="1.5"/><path d="M752,1052 L768,1070 M762,1052 L753,1068" stroke="#e8e8e8" stroke-width="1.5"/><circle cx="766" cy="1068" r="3" fill="none" stroke="#50a8e8" stroke-width="1.5"/><path d="M797,1063 Q797,1052 810,1052 Q820,1052 820,1060 Q820,1065 814,1064 Q810,1064 811,1068 Q811,1072 805,1071 Q797,1070 797,1063 Z" fill="#d0d8e8"/><circle cx="803" cy="1058" r="1.8" fill="#e03030"/><circle cx="808" cy="1056" r="1.8" fill="#30b030"/><circle cx="802" cy="1064" r="1.8" fill="#3060e0"/><path d="M809,1071 L822,1050" stroke="#e0a040" stroke-width="2"/><rect x="847" y="1048" width="24" height="24" fill="#f2d4a8"/><path d="M854,1051 L864,1051 L864,1053 L861,1054 L861,1064 L864,1065 L864,1067 L854,1067 L854,1065 L857,1064 L857,1054 L854,1053 Z" fill="#d07a20"/><path d="M1736,1063 L1742,1057 L1748,1063" fill="none" stroke="#ffffff" stroke-width="1.2"/><rect x="1761.5" y="1054.5" width="12" height="9" fill="none" stroke="#fff" stroke-width="1"/><path d="M1766,1063.5 L1766,1066.5 M1763,1066.5 L1769,1066.5 M1758.5,1054.5 L1763,1054.5 L1763,1058 L1758.5,1058 Z M1760,1058 L1760,1067" fill="none" stroke="#fff" stroke-width="1"/><path d="M1782.5,1057 L1785.5,1057 L1788.5,1054 L1788.5,1066 L1785.5,1063 L1782.5,1063 Z" fill="none" stroke="#fff" stroke-width="1"/><path d="M1791,1058 Q1792.5,1060 1791,1062 M1793.5,1056 Q1796,1060 1793.5,1064 M1796,1054 Q1799.5,1060 1796,1066" fill="none" stroke="#fff" stroke-width="1"/><path d="M1879.5,1052.5 L1895.5,1052.5 L1895.5,1064.5 L1890,1064.5 L1887.5,1067.5 L1885,1064.5 L1879.5,1064.5 Z" fill="none" stroke="#fff" stroke-width="1"/>
</svg>
</body></html>
